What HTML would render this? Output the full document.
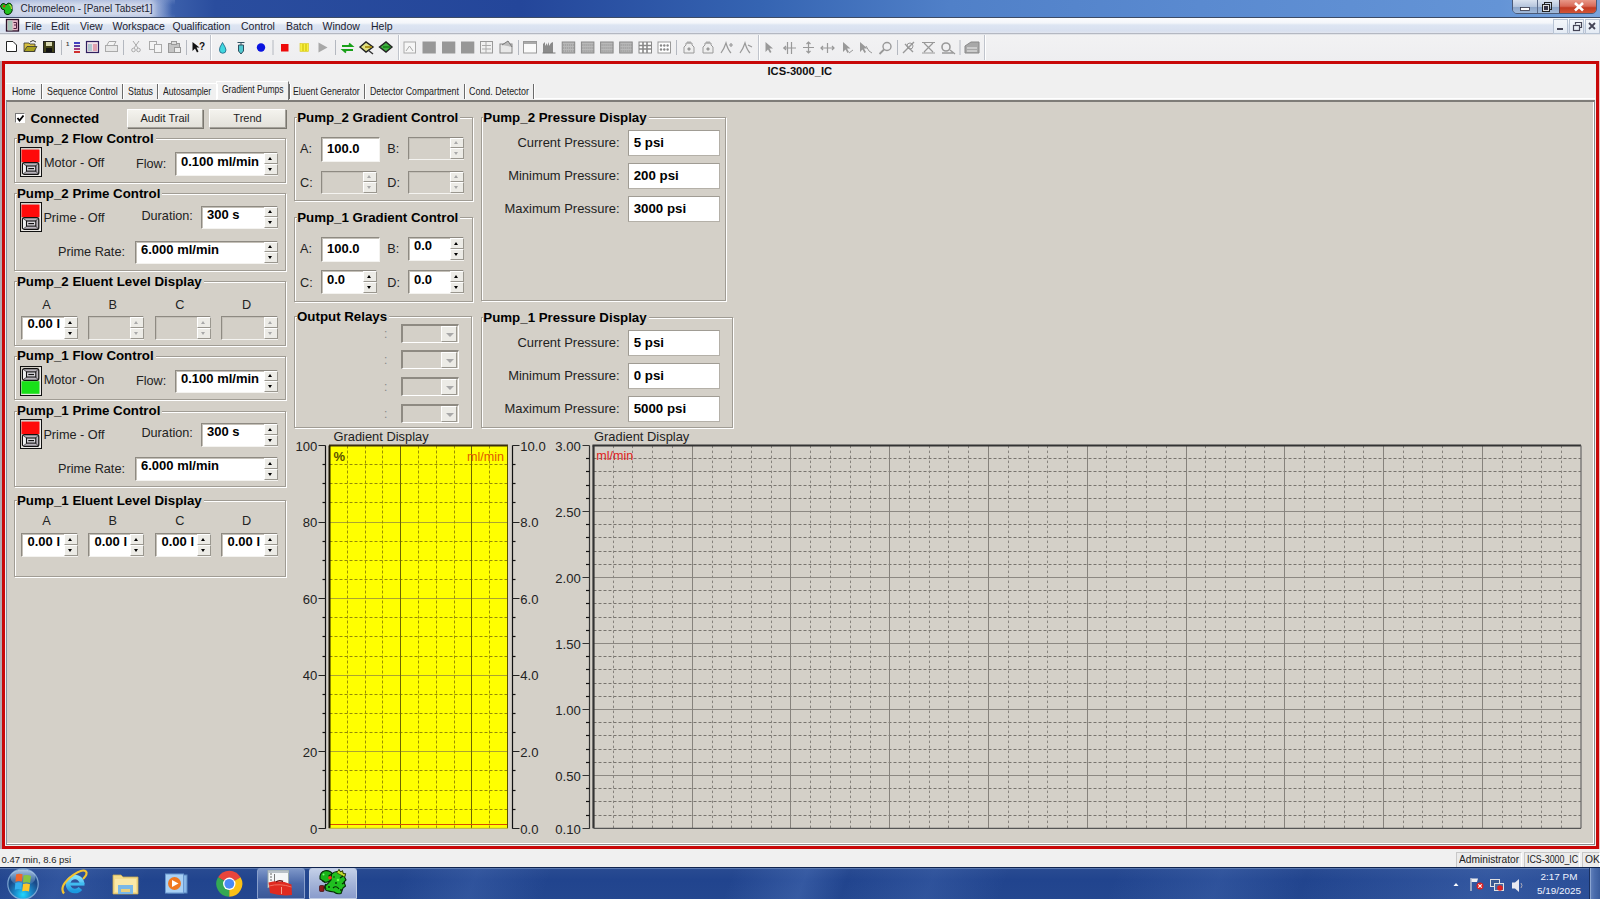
<!DOCTYPE html><html><head><meta charset="utf-8"><style>
html,body{margin:0;padding:0;}
body{width:1600px;height:899px;overflow:hidden;position:relative;font-family:"Liberation Sans",sans-serif;background:#d4d0c8;}
.t{position:absolute;white-space:nowrap;line-height:1;}
</style></head><body>
<div style="position:absolute;left:0px;top:0px;width:1600px;height:17px;background:linear-gradient(90deg,#8ea4d0 0px,#5a7cc0 150px,#3a5eaa 175px,#2a4d9e 215px,#24469a 520px,#3564b2 760px,#5080c8 950px,#5a8ad0 1200px,#6494d6 1500px,#7aa4dc 1600px);"></div>
<div style="position:absolute;left:0px;top:0px;width:175px;height:17px;background:linear-gradient(90deg,rgba(176,190,222,1) 0px,rgba(206,214,234,1) 16px,rgba(212,220,236,1) 80px,rgba(206,214,234,1) 150px,rgba(190,202,230,0.6) 158px,rgba(190,202,230,0) 172px);"></div>
<div style="position:absolute;left:0px;top:0px;width:175px;height:17px;background:linear-gradient(rgba(120,145,200,0.35) 0px,rgba(120,145,200,0) 5px,rgba(120,145,200,0) 14px,rgba(120,145,200,0.2) 17px);"></div>
<div style="position:absolute;left:0px;top:17px;width:1600px;height:1px;background:#3c4b66;"></div>
<div class="t" style="left:20.5px;top:4.03px;font-size:10px;font-weight:normal;color:#1e2533;">Chromeleon - [Panel Tabset1]</div>
<div style="position:absolute;left:0px;top:18px;width:1600px;height:16px;background:linear-gradient(#fbfcfe 0px,#f4f6fa 5px,#dde5f2 7px,#d8e0ef 13px,#e2e6f0 15px);"></div>
<div style="position:absolute;left:0px;top:33px;width:1600px;height:1px;background:#b4b8c2;"></div>
<div style="position:absolute;left:0px;top:34px;width:1600px;height:1px;background:#e2e4e8;"></div>
<div class="t" style="left:25px;top:20.77px;font-size:10.5px;font-weight:normal;color:#1b2230;">File</div>
<div class="t" style="left:51px;top:20.77px;font-size:10.5px;font-weight:normal;color:#1b2230;">Edit</div>
<div class="t" style="left:80px;top:20.77px;font-size:10.5px;font-weight:normal;color:#1b2230;">View</div>
<div class="t" style="left:112.5px;top:20.77px;font-size:10.5px;font-weight:normal;color:#1b2230;">Workspace</div>
<div class="t" style="left:172.5px;top:20.77px;font-size:10.5px;font-weight:normal;color:#1b2230;">Qualification</div>
<div class="t" style="left:241px;top:20.77px;font-size:10.5px;font-weight:normal;color:#1b2230;">Control</div>
<div class="t" style="left:286px;top:20.77px;font-size:10.5px;font-weight:normal;color:#1b2230;">Batch</div>
<div class="t" style="left:322.5px;top:20.77px;font-size:10.5px;font-weight:normal;color:#1b2230;">Window</div>
<div class="t" style="left:371px;top:20.77px;font-size:10.5px;font-weight:normal;color:#1b2230;">Help</div>
<div style="position:absolute;left:0px;top:35px;width:1600px;height:26px;background:linear-gradient(#f2f2f3,#eeeef0);"></div>
<div style="position:absolute;left:0px;top:61px;width:2px;height:788px;background:#b4a8b0;"></div>
<div style="position:absolute;left:1599px;top:61px;width:1px;height:788px;background:#e8c4c4;"></div>
<div style="position:absolute;left:2px;top:61px;width:1597px;height:788px;box-sizing:border-box;border:3px solid #c80808;background:#f0f0f0;"></div>
<!--PANEL-->
<div style="position:absolute;left:6px;top:98px;width:1589px;height:1px;background:#fff;"></div>
<div style="position:absolute;left:6px;top:100px;width:1589px;height:745px;background:#d4d0c8;box-sizing:border-box;border-top:2px solid #7e7c78;border-left:1px solid #8890a0;border-right:1px solid #8a8a8a;border-bottom:1px solid #8a8a8a;box-shadow:inset -1px -1px 0 #fff;"></div>
<div class="t" style="left:767.5px;top:66.18px;font-size:11.2px;font-weight:bold;color:#111;">ICS-3000_IC</div>
<div style="position:absolute;left:6px;top:82px;width:528px;height:18px;background:#f0f0f0;"></div>
<div class="t" style="left:11.75px;top:85.71px;font-size:11px;font-weight:normal;color:#222;transform:scaleX(0.7923);transform-origin:0 0;">Home</div>
<div style="position:absolute;left:41px;top:84px;width:1px;height:15px;background:#6a6a6a;border-right:1px solid #fff;"></div>
<div class="t" style="left:46.75px;top:85.71px;font-size:11px;font-weight:normal;color:#222;transform:scaleX(0.8028);transform-origin:0 0;">Sequence Control</div>
<div style="position:absolute;left:122px;top:84px;width:1px;height:15px;background:#6a6a6a;border-right:1px solid #fff;"></div>
<div class="t" style="left:127.5px;top:85.71px;font-size:11px;font-weight:normal;color:#222;transform:scaleX(0.8008);transform-origin:0 0;">Status</div>
<div style="position:absolute;left:157px;top:84px;width:1px;height:15px;background:#6a6a6a;border-right:1px solid #fff;"></div>
<div class="t" style="left:162.5px;top:85.71px;font-size:11px;font-weight:normal;color:#222;transform:scaleX(0.7810);transform-origin:0 0;">Autosampler</div>
<div style="position:absolute;left:216px;top:84px;width:1px;height:15px;background:#6a6a6a;border-right:1px solid #fff;"></div>
<div class="t" style="left:221.75px;top:84.21px;font-size:11px;font-weight:normal;color:#222;transform:scaleX(0.7733);transform-origin:0 0;">Gradient Pumps</div>
<div style="position:absolute;left:289px;top:84px;width:1px;height:15px;background:#6a6a6a;border-right:1px solid #fff;"></div>
<div class="t" style="left:293.25px;top:85.71px;font-size:11px;font-weight:normal;color:#222;transform:scaleX(0.7961);transform-origin:0 0;">Eluent Generator</div>
<div style="position:absolute;left:364px;top:84px;width:1px;height:15px;background:#6a6a6a;border-right:1px solid #fff;"></div>
<div class="t" style="left:370px;top:85.71px;font-size:11px;font-weight:normal;color:#222;transform:scaleX(0.7987);transform-origin:0 0;">Detector Compartment</div>
<div style="position:absolute;left:464px;top:84px;width:1px;height:15px;background:#6a6a6a;border-right:1px solid #fff;"></div>
<div class="t" style="left:468.6px;top:85.71px;font-size:11px;font-weight:normal;color:#222;transform:scaleX(0.8105);transform-origin:0 0;">Cond. Detector</div>
<div style="position:absolute;left:533px;top:84px;width:1px;height:15px;background:#6a6a6a;border-right:1px solid #fff;"></div>
<div style="position:absolute;left:216px;top:81px;width:73px;height:19px;box-sizing:border-box;border-top:1px solid #fff;border-left:1px solid #fff;border-right:1px solid #777;"></div>
<div style="position:absolute;left:6px;top:83px;width:210px;height:1px;background:#fff;"></div>
<div style="position:absolute;left:15px;top:113px;width:10px;height:10px;background:#fff;box-sizing:border-box;border-top:1px solid #777;border-left:1px solid #777;border-bottom:1px solid #fff;border-right:1px solid #fff;"></div>
<svg style="position:absolute;left:16px;top:114px" width="9" height="9"><path d="M1.5 4 L3.5 6.5 L7.5 1.5" stroke="#000" stroke-width="1.8" fill="none"/></svg>
<div class="t" style="left:30.5px;top:111.74px;font-size:13.3px;font-weight:bold;color:#000;">Connected</div>
<div style="position:absolute;left:127px;top:109px;width:76px;height:19px;background:linear-gradient(#f4f3ee,#e3e1da);box-sizing:border-box;border:1px solid #a4a19a;border-top-color:#fff;border-left-color:#fff;box-shadow:1px 1px 0 #7a776f;"></div>
<div class="t" style="left:127px;top:113.2px;width:76px;text-align:center;font-size:11px;color:#222;">Audit Trail</div>
<div style="position:absolute;left:209px;top:109px;width:77px;height:19px;background:linear-gradient(#f4f3ee,#e3e1da);box-sizing:border-box;border:1px solid #a4a19a;border-top-color:#fff;border-left-color:#fff;box-shadow:1px 1px 0 #7a776f;"></div>
<div class="t" style="left:209px;top:113.2px;width:77px;text-align:center;font-size:11px;color:#222;">Trend</div>
<div style="position:absolute;left:14px;top:138px;width:272px;height:45px;border:1px solid #a09c94;box-shadow:inset 1px 1px 0 #fff,1px 1px 0 #fff;box-sizing:border-box;"></div>
<div class="t" style="left:17px;top:132.34px;font-size:13.3px;font-weight:bold;color:#000;background:#d4d0c8;padding-right:2px;">Pump_2 Flow Control</div>
<svg style="position:absolute;left:20px;top:147px" width="22" height="30"><rect x="0.5" y="0.5" width="21" height="29" fill="#d4d0c8" stroke="#111"/><line x1="20" y1="1.5" x2="20" y2="28.5" stroke="#fff" stroke-width="1.2"/><line x1="1.5" y1="28" x2="20.5" y2="28" stroke="#fff"/><rect x="1.5" y="2.6" width="18" height="12.6" fill="#ff0a0a"/><rect x="2.5" y="15.700000000000001" width="16.3" height="11.7" rx="2" fill="#b9b4bc" stroke="#111" stroke-width="1.2"/><path d="M3 16.2 L6.8 19.2 M18.3 16.2 L15.5 19.2 M3 26.9 L6.8 24.0 M18.3 26.9 L15.5 24.0" stroke="#333" stroke-width="0.8"/><path d="M3 16.9 L6.3 19.4 V23.9 L3 26.4Z" fill="#eef0f0"/><rect x="6.5" y="19.0" width="9.3" height="5.1" fill="#d8d6dc" stroke="#111" stroke-width="1.1"/><line x1="8.3" y1="21.6" x2="14" y2="21.6" stroke="#111" stroke-width="1.2"/></svg>
<div class="t" style="left:44px;top:156.81px;font-size:12.7px;font-weight:normal;color:#222;">Motor - Off</div>
<div class="t" style="left:136px;top:157.51px;font-size:12.7px;font-weight:normal;color:#222;">Flow:</div>
<div style="position:absolute;left:175px;top:152px;width:103px;height:24px;background:#fff;box-sizing:border-box;border-top:1px solid #8e8a82;border-left:1px solid #8e8a82;border-bottom:1px solid #f4f3f0;border-right:1px solid #f4f3f0;box-shadow:inset 1px 1px 0 #c4c0b8;"></div>
<div style="position:absolute;left:264px;top:153px;width:14px;height:11px;background:#ecebe6;box-sizing:border-box;border-top:1px solid #fff;border-left:1px solid #fff;border-right:1px solid #9a978f;border-bottom:1px solid #9a978f;"><div style="position:absolute;left:3px;top:3px;width:0;height:0;border-left:2.5px solid transparent;border-right:2.5px solid transparent;border-bottom:3px solid #000;"></div></div>
<div style="position:absolute;left:264px;top:164px;width:14px;height:11px;background:#ecebe6;box-sizing:border-box;border-top:1px solid #fff;border-left:1px solid #fff;border-right:1px solid #9a978f;border-bottom:1px solid #9a978f;"><div style="position:absolute;left:3px;top:3px;width:0;height:0;border-left:2.5px solid transparent;border-right:2.5px solid transparent;border-top:3px solid #000;"></div></div>
<div class="t" style="left:181px;top:155.27px;font-size:13px;font-weight:bold;color:#000;">0.100 ml/min</div>
<div style="position:absolute;left:14px;top:193px;width:272px;height:78px;border:1px solid #a09c94;box-shadow:inset 1px 1px 0 #fff,1px 1px 0 #fff;box-sizing:border-box;"></div>
<div class="t" style="left:17px;top:187.44px;font-size:13.3px;font-weight:bold;color:#000;background:#d4d0c8;padding-right:2px;">Pump_2 Prime Control</div>
<svg style="position:absolute;left:20px;top:202px" width="22" height="30"><rect x="0.5" y="0.5" width="21" height="29" fill="#d4d0c8" stroke="#111"/><line x1="20" y1="1.5" x2="20" y2="28.5" stroke="#fff" stroke-width="1.2"/><line x1="1.5" y1="28" x2="20.5" y2="28" stroke="#fff"/><rect x="1.5" y="2.6" width="18" height="12.6" fill="#ff0a0a"/><rect x="2.5" y="15.700000000000001" width="16.3" height="11.7" rx="2" fill="#b9b4bc" stroke="#111" stroke-width="1.2"/><path d="M3 16.2 L6.8 19.2 M18.3 16.2 L15.5 19.2 M3 26.9 L6.8 24.0 M18.3 26.9 L15.5 24.0" stroke="#333" stroke-width="0.8"/><path d="M3 16.9 L6.3 19.4 V23.9 L3 26.4Z" fill="#eef0f0"/><rect x="6.5" y="19.0" width="9.3" height="5.1" fill="#d8d6dc" stroke="#111" stroke-width="1.1"/><line x1="8.3" y1="21.6" x2="14" y2="21.6" stroke="#111" stroke-width="1.2"/></svg>
<div class="t" style="left:43.4px;top:211.51px;font-size:12.7px;font-weight:normal;color:#222;">Prime - Off</div>
<div class="t" style="left:141.4px;top:209.81px;font-size:12.7px;font-weight:normal;color:#222;">Duration:</div>
<div style="position:absolute;left:201px;top:206px;width:77px;height:23px;background:#fff;box-sizing:border-box;border-top:1px solid #8e8a82;border-left:1px solid #8e8a82;border-bottom:1px solid #f4f3f0;border-right:1px solid #f4f3f0;box-shadow:inset 1px 1px 0 #c4c0b8;"></div>
<div style="position:absolute;left:264px;top:207px;width:14px;height:10px;background:#ecebe6;box-sizing:border-box;border-top:1px solid #fff;border-left:1px solid #fff;border-right:1px solid #9a978f;border-bottom:1px solid #9a978f;"><div style="position:absolute;left:3px;top:2px;width:0;height:0;border-left:2.5px solid transparent;border-right:2.5px solid transparent;border-bottom:3px solid #000;"></div></div>
<div style="position:absolute;left:264px;top:217px;width:14px;height:11px;background:#ecebe6;box-sizing:border-box;border-top:1px solid #fff;border-left:1px solid #fff;border-right:1px solid #9a978f;border-bottom:1px solid #9a978f;"><div style="position:absolute;left:3px;top:3px;width:0;height:0;border-left:2.5px solid transparent;border-right:2.5px solid transparent;border-top:3px solid #000;"></div></div>
<div class="t" style="left:207px;top:207.97px;font-size:13px;font-weight:bold;color:#000;">300 s</div>
<div class="t" style="left:58px;top:246.01px;font-size:12.7px;font-weight:normal;color:#222;">Prime Rate:</div>
<div style="position:absolute;left:135px;top:241px;width:143px;height:23px;background:#fff;box-sizing:border-box;border-top:1px solid #8e8a82;border-left:1px solid #8e8a82;border-bottom:1px solid #f4f3f0;border-right:1px solid #f4f3f0;box-shadow:inset 1px 1px 0 #c4c0b8;"></div>
<div style="position:absolute;left:264px;top:242px;width:14px;height:10px;background:#ecebe6;box-sizing:border-box;border-top:1px solid #fff;border-left:1px solid #fff;border-right:1px solid #9a978f;border-bottom:1px solid #9a978f;"><div style="position:absolute;left:3px;top:2px;width:0;height:0;border-left:2.5px solid transparent;border-right:2.5px solid transparent;border-bottom:3px solid #000;"></div></div>
<div style="position:absolute;left:264px;top:252px;width:14px;height:11px;background:#ecebe6;box-sizing:border-box;border-top:1px solid #fff;border-left:1px solid #fff;border-right:1px solid #9a978f;border-bottom:1px solid #9a978f;"><div style="position:absolute;left:3px;top:3px;width:0;height:0;border-left:2.5px solid transparent;border-right:2.5px solid transparent;border-top:3px solid #000;"></div></div>
<div class="t" style="left:141px;top:242.97px;font-size:13px;font-weight:bold;color:#000;">6.000 ml/min</div>
<div style="position:absolute;left:14px;top:281px;width:272px;height:65px;border:1px solid #a09c94;box-shadow:inset 1px 1px 0 #fff,1px 1px 0 #fff;box-sizing:border-box;"></div>
<div class="t" style="left:17px;top:275.44px;font-size:13.3px;font-weight:bold;color:#000;background:#d4d0c8;padding-right:2px;">Pump_2 Eluent Level Display</div>
<div class="t" style="left:26.5px;top:298.51px;width:40px;text-align:center;font-size:12.7px;color:#222;">A</div>
<div class="t" style="left:92.8px;top:298.51px;width:40px;text-align:center;font-size:12.7px;color:#222;">B</div>
<div class="t" style="left:159.9px;top:298.51px;width:40px;text-align:center;font-size:12.7px;color:#222;">C</div>
<div class="t" style="left:226.7px;top:298.51px;width:40px;text-align:center;font-size:12.7px;color:#222;">D</div>
<div style="position:absolute;left:21px;top:316px;width:57px;height:24px;background:#fff;box-sizing:border-box;border-top:1px solid #8e8a82;border-left:1px solid #8e8a82;border-bottom:1px solid #f4f3f0;border-right:1px solid #f4f3f0;box-shadow:inset 1px 1px 0 #c4c0b8;"></div>
<div style="position:absolute;left:64px;top:317px;width:14px;height:11px;background:#ecebe6;box-sizing:border-box;border-top:1px solid #fff;border-left:1px solid #fff;border-right:1px solid #9a978f;border-bottom:1px solid #9a978f;"><div style="position:absolute;left:3px;top:3px;width:0;height:0;border-left:2.5px solid transparent;border-right:2.5px solid transparent;border-bottom:3px solid #000;"></div></div>
<div style="position:absolute;left:64px;top:328px;width:14px;height:11px;background:#ecebe6;box-sizing:border-box;border-top:1px solid #fff;border-left:1px solid #fff;border-right:1px solid #9a978f;border-bottom:1px solid #9a978f;"><div style="position:absolute;left:3px;top:3px;width:0;height:0;border-left:2.5px solid transparent;border-right:2.5px solid transparent;border-top:3px solid #000;"></div></div>
<div class="t" style="left:27.5px;top:317.47px;font-size:13px;font-weight:bold;color:#000;">0.00 l</div>
<div style="position:absolute;left:88px;top:316px;width:56px;height:24px;background:#d4d0c8;box-sizing:border-box;border-top:1px solid #8e8a82;border-left:1px solid #8e8a82;border-bottom:1px solid #f4f3f0;border-right:1px solid #f4f3f0;box-shadow:inset 1px 1px 0 #c4c0b8;"></div>
<div style="position:absolute;left:130px;top:317px;width:14px;height:11px;background:#ecebe6;box-sizing:border-box;border-top:1px solid #fff;border-left:1px solid #fff;border-right:1px solid #9a978f;border-bottom:1px solid #9a978f;"><div style="position:absolute;left:3px;top:3px;width:0;height:0;border-left:2.5px solid transparent;border-right:2.5px solid transparent;border-bottom:3px solid #a8a8a8;"></div></div>
<div style="position:absolute;left:130px;top:328px;width:14px;height:11px;background:#ecebe6;box-sizing:border-box;border-top:1px solid #fff;border-left:1px solid #fff;border-right:1px solid #9a978f;border-bottom:1px solid #9a978f;"><div style="position:absolute;left:3px;top:3px;width:0;height:0;border-left:2.5px solid transparent;border-right:2.5px solid transparent;border-top:3px solid #a8a8a8;"></div></div>
<div style="position:absolute;left:155px;top:316px;width:56px;height:24px;background:#d4d0c8;box-sizing:border-box;border-top:1px solid #8e8a82;border-left:1px solid #8e8a82;border-bottom:1px solid #f4f3f0;border-right:1px solid #f4f3f0;box-shadow:inset 1px 1px 0 #c4c0b8;"></div>
<div style="position:absolute;left:197px;top:317px;width:14px;height:11px;background:#ecebe6;box-sizing:border-box;border-top:1px solid #fff;border-left:1px solid #fff;border-right:1px solid #9a978f;border-bottom:1px solid #9a978f;"><div style="position:absolute;left:3px;top:3px;width:0;height:0;border-left:2.5px solid transparent;border-right:2.5px solid transparent;border-bottom:3px solid #a8a8a8;"></div></div>
<div style="position:absolute;left:197px;top:328px;width:14px;height:11px;background:#ecebe6;box-sizing:border-box;border-top:1px solid #fff;border-left:1px solid #fff;border-right:1px solid #9a978f;border-bottom:1px solid #9a978f;"><div style="position:absolute;left:3px;top:3px;width:0;height:0;border-left:2.5px solid transparent;border-right:2.5px solid transparent;border-top:3px solid #a8a8a8;"></div></div>
<div style="position:absolute;left:221px;top:316px;width:57px;height:24px;background:#d4d0c8;box-sizing:border-box;border-top:1px solid #8e8a82;border-left:1px solid #8e8a82;border-bottom:1px solid #f4f3f0;border-right:1px solid #f4f3f0;box-shadow:inset 1px 1px 0 #c4c0b8;"></div>
<div style="position:absolute;left:264px;top:317px;width:14px;height:11px;background:#ecebe6;box-sizing:border-box;border-top:1px solid #fff;border-left:1px solid #fff;border-right:1px solid #9a978f;border-bottom:1px solid #9a978f;"><div style="position:absolute;left:3px;top:3px;width:0;height:0;border-left:2.5px solid transparent;border-right:2.5px solid transparent;border-bottom:3px solid #a8a8a8;"></div></div>
<div style="position:absolute;left:264px;top:328px;width:14px;height:11px;background:#ecebe6;box-sizing:border-box;border-top:1px solid #fff;border-left:1px solid #fff;border-right:1px solid #9a978f;border-bottom:1px solid #9a978f;"><div style="position:absolute;left:3px;top:3px;width:0;height:0;border-left:2.5px solid transparent;border-right:2.5px solid transparent;border-top:3px solid #a8a8a8;"></div></div>
<div style="position:absolute;left:14px;top:356px;width:272px;height:44px;border:1px solid #a09c94;box-shadow:inset 1px 1px 0 #fff,1px 1px 0 #fff;box-sizing:border-box;"></div>
<div class="t" style="left:17px;top:349.44px;font-size:13.3px;font-weight:bold;color:#000;background:#d4d0c8;padding-right:2px;">Pump_1 Flow Control</div>
<svg style="position:absolute;left:20px;top:366px" width="22" height="30"><rect x="0.5" y="0.5" width="21" height="29" fill="#d4d0c8" stroke="#111"/><line x1="20" y1="1.5" x2="20" y2="28.5" stroke="#fff" stroke-width="1.2"/><line x1="1.5" y1="28" x2="20.5" y2="28" stroke="#fff"/><rect x="1.5" y="15.2" width="18" height="12.6" fill="#19e019"/><rect x="2.5" y="2.5999999999999996" width="16.3" height="11.7" rx="2" fill="#b9b4bc" stroke="#111" stroke-width="1.2"/><path d="M3 3.0999999999999996 L6.8 6.1 M18.3 3.0999999999999996 L15.5 6.1 M3 13.8 L6.8 10.899999999999999 M18.3 13.8 L15.5 10.899999999999999" stroke="#333" stroke-width="0.8"/><path d="M3 3.8 L6.3 6.3 V10.8 L3 13.3Z" fill="#eef0f0"/><rect x="6.5" y="5.9" width="9.3" height="5.1" fill="#d8d6dc" stroke="#111" stroke-width="1.1"/><line x1="8.3" y1="8.5" x2="14" y2="8.5" stroke="#111" stroke-width="1.2"/></svg>
<div class="t" style="left:43.7px;top:374.31px;font-size:12.7px;font-weight:normal;color:#222;">Motor - On</div>
<div class="t" style="left:136px;top:375.01px;font-size:12.7px;font-weight:normal;color:#222;">Flow:</div>
<div style="position:absolute;left:175px;top:370px;width:103px;height:23px;background:#fff;box-sizing:border-box;border-top:1px solid #8e8a82;border-left:1px solid #8e8a82;border-bottom:1px solid #f4f3f0;border-right:1px solid #f4f3f0;box-shadow:inset 1px 1px 0 #c4c0b8;"></div>
<div style="position:absolute;left:264px;top:371px;width:14px;height:10px;background:#ecebe6;box-sizing:border-box;border-top:1px solid #fff;border-left:1px solid #fff;border-right:1px solid #9a978f;border-bottom:1px solid #9a978f;"><div style="position:absolute;left:3px;top:2px;width:0;height:0;border-left:2.5px solid transparent;border-right:2.5px solid transparent;border-bottom:3px solid #000;"></div></div>
<div style="position:absolute;left:264px;top:381px;width:14px;height:11px;background:#ecebe6;box-sizing:border-box;border-top:1px solid #fff;border-left:1px solid #fff;border-right:1px solid #9a978f;border-bottom:1px solid #9a978f;"><div style="position:absolute;left:3px;top:3px;width:0;height:0;border-left:2.5px solid transparent;border-right:2.5px solid transparent;border-top:3px solid #000;"></div></div>
<div class="t" style="left:181px;top:371.97px;font-size:13px;font-weight:bold;color:#000;">0.100 ml/min</div>
<div style="position:absolute;left:14px;top:411px;width:272px;height:76px;border:1px solid #a09c94;box-shadow:inset 1px 1px 0 #fff,1px 1px 0 #fff;box-sizing:border-box;"></div>
<div class="t" style="left:17px;top:404.24px;font-size:13.3px;font-weight:bold;color:#000;background:#d4d0c8;padding-right:2px;">Pump_1 Prime Control</div>
<svg style="position:absolute;left:20px;top:419px" width="22" height="30"><rect x="0.5" y="0.5" width="21" height="29" fill="#d4d0c8" stroke="#111"/><line x1="20" y1="1.5" x2="20" y2="28.5" stroke="#fff" stroke-width="1.2"/><line x1="1.5" y1="28" x2="20.5" y2="28" stroke="#fff"/><rect x="1.5" y="2.6" width="18" height="12.6" fill="#ff0a0a"/><rect x="2.5" y="15.700000000000001" width="16.3" height="11.7" rx="2" fill="#b9b4bc" stroke="#111" stroke-width="1.2"/><path d="M3 16.2 L6.8 19.2 M18.3 16.2 L15.5 19.2 M3 26.9 L6.8 24.0 M18.3 26.9 L15.5 24.0" stroke="#333" stroke-width="0.8"/><path d="M3 16.9 L6.3 19.4 V23.9 L3 26.4Z" fill="#eef0f0"/><rect x="6.5" y="19.0" width="9.3" height="5.1" fill="#d8d6dc" stroke="#111" stroke-width="1.1"/><line x1="8.3" y1="21.6" x2="14" y2="21.6" stroke="#111" stroke-width="1.2"/></svg>
<div class="t" style="left:43.4px;top:428.51px;font-size:12.7px;font-weight:normal;color:#222;">Prime - Off</div>
<div class="t" style="left:141.4px;top:426.81px;font-size:12.7px;font-weight:normal;color:#222;">Duration:</div>
<div style="position:absolute;left:201px;top:423px;width:77px;height:24px;background:#fff;box-sizing:border-box;border-top:1px solid #8e8a82;border-left:1px solid #8e8a82;border-bottom:1px solid #f4f3f0;border-right:1px solid #f4f3f0;box-shadow:inset 1px 1px 0 #c4c0b8;"></div>
<div style="position:absolute;left:264px;top:424px;width:14px;height:11px;background:#ecebe6;box-sizing:border-box;border-top:1px solid #fff;border-left:1px solid #fff;border-right:1px solid #9a978f;border-bottom:1px solid #9a978f;"><div style="position:absolute;left:3px;top:3px;width:0;height:0;border-left:2.5px solid transparent;border-right:2.5px solid transparent;border-bottom:3px solid #000;"></div></div>
<div style="position:absolute;left:264px;top:435px;width:14px;height:11px;background:#ecebe6;box-sizing:border-box;border-top:1px solid #fff;border-left:1px solid #fff;border-right:1px solid #9a978f;border-bottom:1px solid #9a978f;"><div style="position:absolute;left:3px;top:3px;width:0;height:0;border-left:2.5px solid transparent;border-right:2.5px solid transparent;border-top:3px solid #000;"></div></div>
<div class="t" style="left:207px;top:424.97px;font-size:13px;font-weight:bold;color:#000;">300 s</div>
<div class="t" style="left:58px;top:462.51px;font-size:12.7px;font-weight:normal;color:#222;">Prime Rate:</div>
<div style="position:absolute;left:135px;top:457px;width:143px;height:24px;background:#fff;box-sizing:border-box;border-top:1px solid #8e8a82;border-left:1px solid #8e8a82;border-bottom:1px solid #f4f3f0;border-right:1px solid #f4f3f0;box-shadow:inset 1px 1px 0 #c4c0b8;"></div>
<div style="position:absolute;left:264px;top:458px;width:14px;height:11px;background:#ecebe6;box-sizing:border-box;border-top:1px solid #fff;border-left:1px solid #fff;border-right:1px solid #9a978f;border-bottom:1px solid #9a978f;"><div style="position:absolute;left:3px;top:3px;width:0;height:0;border-left:2.5px solid transparent;border-right:2.5px solid transparent;border-bottom:3px solid #000;"></div></div>
<div style="position:absolute;left:264px;top:469px;width:14px;height:11px;background:#ecebe6;box-sizing:border-box;border-top:1px solid #fff;border-left:1px solid #fff;border-right:1px solid #9a978f;border-bottom:1px solid #9a978f;"><div style="position:absolute;left:3px;top:3px;width:0;height:0;border-left:2.5px solid transparent;border-right:2.5px solid transparent;border-top:3px solid #000;"></div></div>
<div class="t" style="left:141px;top:459.47px;font-size:13px;font-weight:bold;color:#000;">6.000 ml/min</div>
<div style="position:absolute;left:14px;top:500px;width:272px;height:77px;border:1px solid #a09c94;box-shadow:inset 1px 1px 0 #fff,1px 1px 0 #fff;box-sizing:border-box;"></div>
<div class="t" style="left:17px;top:493.74px;font-size:13.3px;font-weight:bold;color:#000;background:#d4d0c8;padding-right:2px;">Pump_1 Eluent Level Display</div>
<div class="t" style="left:26.5px;top:515.41px;width:40px;text-align:center;font-size:12.7px;color:#222;">A</div>
<div class="t" style="left:92.8px;top:515.41px;width:40px;text-align:center;font-size:12.7px;color:#222;">B</div>
<div class="t" style="left:159.9px;top:515.41px;width:40px;text-align:center;font-size:12.7px;color:#222;">C</div>
<div class="t" style="left:226.7px;top:515.41px;width:40px;text-align:center;font-size:12.7px;color:#222;">D</div>
<div style="position:absolute;left:21px;top:533px;width:57px;height:24px;background:#fff;box-sizing:border-box;border-top:1px solid #8e8a82;border-left:1px solid #8e8a82;border-bottom:1px solid #f4f3f0;border-right:1px solid #f4f3f0;box-shadow:inset 1px 1px 0 #c4c0b8;"></div>
<div style="position:absolute;left:64px;top:534px;width:14px;height:11px;background:#ecebe6;box-sizing:border-box;border-top:1px solid #fff;border-left:1px solid #fff;border-right:1px solid #9a978f;border-bottom:1px solid #9a978f;"><div style="position:absolute;left:3px;top:3px;width:0;height:0;border-left:2.5px solid transparent;border-right:2.5px solid transparent;border-bottom:3px solid #000;"></div></div>
<div style="position:absolute;left:64px;top:545px;width:14px;height:11px;background:#ecebe6;box-sizing:border-box;border-top:1px solid #fff;border-left:1px solid #fff;border-right:1px solid #9a978f;border-bottom:1px solid #9a978f;"><div style="position:absolute;left:3px;top:3px;width:0;height:0;border-left:2.5px solid transparent;border-right:2.5px solid transparent;border-top:3px solid #000;"></div></div>
<div class="t" style="left:27.5px;top:534.97px;font-size:13px;font-weight:bold;color:#000;">0.00 l</div>
<div style="position:absolute;left:88px;top:533px;width:56px;height:24px;background:#fff;box-sizing:border-box;border-top:1px solid #8e8a82;border-left:1px solid #8e8a82;border-bottom:1px solid #f4f3f0;border-right:1px solid #f4f3f0;box-shadow:inset 1px 1px 0 #c4c0b8;"></div>
<div style="position:absolute;left:130px;top:534px;width:14px;height:11px;background:#ecebe6;box-sizing:border-box;border-top:1px solid #fff;border-left:1px solid #fff;border-right:1px solid #9a978f;border-bottom:1px solid #9a978f;"><div style="position:absolute;left:3px;top:3px;width:0;height:0;border-left:2.5px solid transparent;border-right:2.5px solid transparent;border-bottom:3px solid #000;"></div></div>
<div style="position:absolute;left:130px;top:545px;width:14px;height:11px;background:#ecebe6;box-sizing:border-box;border-top:1px solid #fff;border-left:1px solid #fff;border-right:1px solid #9a978f;border-bottom:1px solid #9a978f;"><div style="position:absolute;left:3px;top:3px;width:0;height:0;border-left:2.5px solid transparent;border-right:2.5px solid transparent;border-top:3px solid #000;"></div></div>
<div class="t" style="left:94.5px;top:534.97px;font-size:13px;font-weight:bold;color:#000;">0.00 l</div>
<div style="position:absolute;left:155px;top:533px;width:56px;height:24px;background:#fff;box-sizing:border-box;border-top:1px solid #8e8a82;border-left:1px solid #8e8a82;border-bottom:1px solid #f4f3f0;border-right:1px solid #f4f3f0;box-shadow:inset 1px 1px 0 #c4c0b8;"></div>
<div style="position:absolute;left:197px;top:534px;width:14px;height:11px;background:#ecebe6;box-sizing:border-box;border-top:1px solid #fff;border-left:1px solid #fff;border-right:1px solid #9a978f;border-bottom:1px solid #9a978f;"><div style="position:absolute;left:3px;top:3px;width:0;height:0;border-left:2.5px solid transparent;border-right:2.5px solid transparent;border-bottom:3px solid #000;"></div></div>
<div style="position:absolute;left:197px;top:545px;width:14px;height:11px;background:#ecebe6;box-sizing:border-box;border-top:1px solid #fff;border-left:1px solid #fff;border-right:1px solid #9a978f;border-bottom:1px solid #9a978f;"><div style="position:absolute;left:3px;top:3px;width:0;height:0;border-left:2.5px solid transparent;border-right:2.5px solid transparent;border-top:3px solid #000;"></div></div>
<div class="t" style="left:161.5px;top:534.97px;font-size:13px;font-weight:bold;color:#000;">0.00 l</div>
<div style="position:absolute;left:221px;top:533px;width:57px;height:24px;background:#fff;box-sizing:border-box;border-top:1px solid #8e8a82;border-left:1px solid #8e8a82;border-bottom:1px solid #f4f3f0;border-right:1px solid #f4f3f0;box-shadow:inset 1px 1px 0 #c4c0b8;"></div>
<div style="position:absolute;left:264px;top:534px;width:14px;height:11px;background:#ecebe6;box-sizing:border-box;border-top:1px solid #fff;border-left:1px solid #fff;border-right:1px solid #9a978f;border-bottom:1px solid #9a978f;"><div style="position:absolute;left:3px;top:3px;width:0;height:0;border-left:2.5px solid transparent;border-right:2.5px solid transparent;border-bottom:3px solid #000;"></div></div>
<div style="position:absolute;left:264px;top:545px;width:14px;height:11px;background:#ecebe6;box-sizing:border-box;border-top:1px solid #fff;border-left:1px solid #fff;border-right:1px solid #9a978f;border-bottom:1px solid #9a978f;"><div style="position:absolute;left:3px;top:3px;width:0;height:0;border-left:2.5px solid transparent;border-right:2.5px solid transparent;border-top:3px solid #000;"></div></div>
<div class="t" style="left:227.5px;top:534.97px;font-size:13px;font-weight:bold;color:#000;">0.00 l</div>
<div style="position:absolute;left:294px;top:117px;width:179px;height:84px;border:1px solid #a09c94;box-shadow:inset 1px 1px 0 #fff,1px 1px 0 #fff;box-sizing:border-box;"></div>
<div class="t" style="left:297.2px;top:110.64px;font-size:13.3px;font-weight:bold;color:#000;background:#d4d0c8;padding-right:2px;">Pump_2 Gradient Control</div>
<div class="t" style="left:300px;top:143.01px;font-size:12.7px;font-weight:normal;color:#222;">A:</div>
<div style="position:absolute;left:321px;top:137px;width:59px;height:25px;background:#fff;box-sizing:border-box;border-top:1px solid #8e8a82;border-left:1px solid #8e8a82;border-bottom:1px solid #f4f3f0;border-right:1px solid #f4f3f0;box-shadow:inset 1px 1px 0 #c4c0b8;"></div>
<div class="t" style="left:327px;top:141.97px;font-size:13px;font-weight:bold;color:#000;">100.0</div>
<div class="t" style="left:387.3px;top:143.01px;font-size:12.7px;font-weight:normal;color:#222;">B:</div>
<div style="position:absolute;left:408px;top:137px;width:56px;height:23px;background:#d4d0c8;box-sizing:border-box;border-top:1px solid #8e8a82;border-left:1px solid #8e8a82;border-bottom:1px solid #f4f3f0;border-right:1px solid #f4f3f0;box-shadow:inset 1px 1px 0 #c4c0b8;"></div>
<div style="position:absolute;left:450px;top:138px;width:14px;height:10px;background:#ecebe6;box-sizing:border-box;border-top:1px solid #fff;border-left:1px solid #fff;border-right:1px solid #9a978f;border-bottom:1px solid #9a978f;"><div style="position:absolute;left:3px;top:2px;width:0;height:0;border-left:2.5px solid transparent;border-right:2.5px solid transparent;border-bottom:3px solid #a8a8a8;"></div></div>
<div style="position:absolute;left:450px;top:148px;width:14px;height:11px;background:#ecebe6;box-sizing:border-box;border-top:1px solid #fff;border-left:1px solid #fff;border-right:1px solid #9a978f;border-bottom:1px solid #9a978f;"><div style="position:absolute;left:3px;top:3px;width:0;height:0;border-left:2.5px solid transparent;border-right:2.5px solid transparent;border-top:3px solid #a8a8a8;"></div></div>
<div class="t" style="left:300px;top:176.51px;font-size:12.7px;font-weight:normal;color:#222;">C:</div>
<div style="position:absolute;left:321px;top:171px;width:56px;height:23px;background:#d4d0c8;box-sizing:border-box;border-top:1px solid #8e8a82;border-left:1px solid #8e8a82;border-bottom:1px solid #f4f3f0;border-right:1px solid #f4f3f0;box-shadow:inset 1px 1px 0 #c4c0b8;"></div>
<div style="position:absolute;left:363px;top:172px;width:14px;height:10px;background:#ecebe6;box-sizing:border-box;border-top:1px solid #fff;border-left:1px solid #fff;border-right:1px solid #9a978f;border-bottom:1px solid #9a978f;"><div style="position:absolute;left:3px;top:2px;width:0;height:0;border-left:2.5px solid transparent;border-right:2.5px solid transparent;border-bottom:3px solid #a8a8a8;"></div></div>
<div style="position:absolute;left:363px;top:182px;width:14px;height:11px;background:#ecebe6;box-sizing:border-box;border-top:1px solid #fff;border-left:1px solid #fff;border-right:1px solid #9a978f;border-bottom:1px solid #9a978f;"><div style="position:absolute;left:3px;top:3px;width:0;height:0;border-left:2.5px solid transparent;border-right:2.5px solid transparent;border-top:3px solid #a8a8a8;"></div></div>
<div class="t" style="left:387.3px;top:176.51px;font-size:12.7px;font-weight:normal;color:#222;">D:</div>
<div style="position:absolute;left:408px;top:171px;width:56px;height:23px;background:#d4d0c8;box-sizing:border-box;border-top:1px solid #8e8a82;border-left:1px solid #8e8a82;border-bottom:1px solid #f4f3f0;border-right:1px solid #f4f3f0;box-shadow:inset 1px 1px 0 #c4c0b8;"></div>
<div style="position:absolute;left:450px;top:172px;width:14px;height:10px;background:#ecebe6;box-sizing:border-box;border-top:1px solid #fff;border-left:1px solid #fff;border-right:1px solid #9a978f;border-bottom:1px solid #9a978f;"><div style="position:absolute;left:3px;top:2px;width:0;height:0;border-left:2.5px solid transparent;border-right:2.5px solid transparent;border-bottom:3px solid #a8a8a8;"></div></div>
<div style="position:absolute;left:450px;top:182px;width:14px;height:11px;background:#ecebe6;box-sizing:border-box;border-top:1px solid #fff;border-left:1px solid #fff;border-right:1px solid #9a978f;border-bottom:1px solid #9a978f;"><div style="position:absolute;left:3px;top:3px;width:0;height:0;border-left:2.5px solid transparent;border-right:2.5px solid transparent;border-top:3px solid #a8a8a8;"></div></div>
<div style="position:absolute;left:294px;top:217px;width:179px;height:85px;border:1px solid #a09c94;box-shadow:inset 1px 1px 0 #fff,1px 1px 0 #fff;box-sizing:border-box;"></div>
<div class="t" style="left:297.2px;top:210.74px;font-size:13.3px;font-weight:bold;color:#000;background:#d4d0c8;padding-right:2px;">Pump_1 Gradient Control</div>
<div class="t" style="left:300px;top:243.01px;font-size:12.7px;font-weight:normal;color:#222;">A:</div>
<div style="position:absolute;left:321px;top:237px;width:59px;height:25px;background:#fff;box-sizing:border-box;border-top:1px solid #8e8a82;border-left:1px solid #8e8a82;border-bottom:1px solid #f4f3f0;border-right:1px solid #f4f3f0;box-shadow:inset 1px 1px 0 #c4c0b8;"></div>
<div class="t" style="left:327px;top:241.97px;font-size:13px;font-weight:bold;color:#000;">100.0</div>
<div class="t" style="left:387.3px;top:243.01px;font-size:12.7px;font-weight:normal;color:#222;">B:</div>
<div style="position:absolute;left:408px;top:237px;width:56px;height:24px;background:#fff;box-sizing:border-box;border-top:1px solid #8e8a82;border-left:1px solid #8e8a82;border-bottom:1px solid #f4f3f0;border-right:1px solid #f4f3f0;box-shadow:inset 1px 1px 0 #c4c0b8;"></div>
<div style="position:absolute;left:450px;top:238px;width:14px;height:11px;background:#ecebe6;box-sizing:border-box;border-top:1px solid #fff;border-left:1px solid #fff;border-right:1px solid #9a978f;border-bottom:1px solid #9a978f;"><div style="position:absolute;left:3px;top:3px;width:0;height:0;border-left:2.5px solid transparent;border-right:2.5px solid transparent;border-bottom:3px solid #000;"></div></div>
<div style="position:absolute;left:450px;top:249px;width:14px;height:11px;background:#ecebe6;box-sizing:border-box;border-top:1px solid #fff;border-left:1px solid #fff;border-right:1px solid #9a978f;border-bottom:1px solid #9a978f;"><div style="position:absolute;left:3px;top:3px;width:0;height:0;border-left:2.5px solid transparent;border-right:2.5px solid transparent;border-top:3px solid #000;"></div></div>
<div class="t" style="left:414px;top:239.47px;font-size:13px;font-weight:bold;color:#000;">0.0</div>
<div class="t" style="left:300px;top:276.51px;font-size:12.7px;font-weight:normal;color:#222;">C:</div>
<div style="position:absolute;left:321px;top:270px;width:56px;height:24px;background:#fff;box-sizing:border-box;border-top:1px solid #8e8a82;border-left:1px solid #8e8a82;border-bottom:1px solid #f4f3f0;border-right:1px solid #f4f3f0;box-shadow:inset 1px 1px 0 #c4c0b8;"></div>
<div style="position:absolute;left:363px;top:271px;width:14px;height:11px;background:#ecebe6;box-sizing:border-box;border-top:1px solid #fff;border-left:1px solid #fff;border-right:1px solid #9a978f;border-bottom:1px solid #9a978f;"><div style="position:absolute;left:3px;top:3px;width:0;height:0;border-left:2.5px solid transparent;border-right:2.5px solid transparent;border-bottom:3px solid #000;"></div></div>
<div style="position:absolute;left:363px;top:282px;width:14px;height:11px;background:#ecebe6;box-sizing:border-box;border-top:1px solid #fff;border-left:1px solid #fff;border-right:1px solid #9a978f;border-bottom:1px solid #9a978f;"><div style="position:absolute;left:3px;top:3px;width:0;height:0;border-left:2.5px solid transparent;border-right:2.5px solid transparent;border-top:3px solid #000;"></div></div>
<div class="t" style="left:327px;top:272.97px;font-size:13px;font-weight:bold;color:#000;">0.0</div>
<div class="t" style="left:387.3px;top:276.51px;font-size:12.7px;font-weight:normal;color:#222;">D:</div>
<div style="position:absolute;left:408px;top:270px;width:56px;height:24px;background:#fff;box-sizing:border-box;border-top:1px solid #8e8a82;border-left:1px solid #8e8a82;border-bottom:1px solid #f4f3f0;border-right:1px solid #f4f3f0;box-shadow:inset 1px 1px 0 #c4c0b8;"></div>
<div style="position:absolute;left:450px;top:271px;width:14px;height:11px;background:#ecebe6;box-sizing:border-box;border-top:1px solid #fff;border-left:1px solid #fff;border-right:1px solid #9a978f;border-bottom:1px solid #9a978f;"><div style="position:absolute;left:3px;top:3px;width:0;height:0;border-left:2.5px solid transparent;border-right:2.5px solid transparent;border-bottom:3px solid #000;"></div></div>
<div style="position:absolute;left:450px;top:282px;width:14px;height:11px;background:#ecebe6;box-sizing:border-box;border-top:1px solid #fff;border-left:1px solid #fff;border-right:1px solid #9a978f;border-bottom:1px solid #9a978f;"><div style="position:absolute;left:3px;top:3px;width:0;height:0;border-left:2.5px solid transparent;border-right:2.5px solid transparent;border-top:3px solid #000;"></div></div>
<div class="t" style="left:414px;top:272.97px;font-size:13px;font-weight:bold;color:#000;">0.0</div>
<div style="position:absolute;left:294px;top:316px;width:178px;height:112px;border:1px solid #a09c94;box-shadow:inset 1px 1px 0 #fff,1px 1px 0 #fff;box-sizing:border-box;"></div>
<div class="t" style="left:297px;top:310.44px;font-size:13.3px;font-weight:bold;color:#000;background:#d4d0c8;padding-right:2px;">Output Relays</div>
<div class="t" style="left:384px;top:327.59px;font-size:12px;font-weight:normal;color:#888;">:</div>
<div style="position:absolute;left:401px;top:324px;width:58px;height:19px;background:#d4d0c8;box-sizing:border-box;border-top:2px solid #8e8a82;border-left:2px solid #8e8a82;border-bottom:1px solid #fff;border-right:1px solid #fff;"></div>
<div style="position:absolute;left:441px;top:326px;width:16px;height:16px;background:#ecebe6;box-sizing:border-box;border-top:1px solid #fff;border-left:1px solid #fff;border-right:1px solid #9a978f;border-bottom:1px solid #9a978f;"><div style="position:absolute;left:4px;top:6px;width:0;height:0;border-left:4px solid transparent;border-right:4px solid transparent;border-top:4px solid #a8a8a8;"></div></div>
<div class="t" style="left:384px;top:353.59px;font-size:12px;font-weight:normal;color:#888;">:</div>
<div style="position:absolute;left:401px;top:350px;width:58px;height:19px;background:#d4d0c8;box-sizing:border-box;border-top:2px solid #8e8a82;border-left:2px solid #8e8a82;border-bottom:1px solid #fff;border-right:1px solid #fff;"></div>
<div style="position:absolute;left:441px;top:352px;width:16px;height:16px;background:#ecebe6;box-sizing:border-box;border-top:1px solid #fff;border-left:1px solid #fff;border-right:1px solid #9a978f;border-bottom:1px solid #9a978f;"><div style="position:absolute;left:4px;top:6px;width:0;height:0;border-left:4px solid transparent;border-right:4px solid transparent;border-top:4px solid #a8a8a8;"></div></div>
<div class="t" style="left:384px;top:380.59px;font-size:12px;font-weight:normal;color:#888;">:</div>
<div style="position:absolute;left:401px;top:377px;width:58px;height:19px;background:#d4d0c8;box-sizing:border-box;border-top:2px solid #8e8a82;border-left:2px solid #8e8a82;border-bottom:1px solid #fff;border-right:1px solid #fff;"></div>
<div style="position:absolute;left:441px;top:379px;width:16px;height:16px;background:#ecebe6;box-sizing:border-box;border-top:1px solid #fff;border-left:1px solid #fff;border-right:1px solid #9a978f;border-bottom:1px solid #9a978f;"><div style="position:absolute;left:4px;top:6px;width:0;height:0;border-left:4px solid transparent;border-right:4px solid transparent;border-top:4px solid #a8a8a8;"></div></div>
<div class="t" style="left:384px;top:407.59px;font-size:12px;font-weight:normal;color:#888;">:</div>
<div style="position:absolute;left:401px;top:404px;width:58px;height:19px;background:#d4d0c8;box-sizing:border-box;border-top:2px solid #8e8a82;border-left:2px solid #8e8a82;border-bottom:1px solid #fff;border-right:1px solid #fff;"></div>
<div style="position:absolute;left:441px;top:406px;width:16px;height:16px;background:#ecebe6;box-sizing:border-box;border-top:1px solid #fff;border-left:1px solid #fff;border-right:1px solid #9a978f;border-bottom:1px solid #9a978f;"><div style="position:absolute;left:4px;top:6px;width:0;height:0;border-left:4px solid transparent;border-right:4px solid transparent;border-top:4px solid #a8a8a8;"></div></div>
<div style="position:absolute;left:481px;top:117px;width:245px;height:184px;border:1px solid #a09c94;box-shadow:inset 1px 1px 0 #fff,1px 1px 0 #fff;box-sizing:border-box;"></div>
<div class="t" style="left:483.3px;top:110.54px;font-size:13.3px;font-weight:bold;color:#000;background:#d4d0c8;padding-right:2px;">Pump_2 Pressure Display</div>
<div class="t" style="right:980.4px;top:136.78px;font-size:12.95px;font-weight:normal;color:#222;text-align:right;">Current Pressure:</div>
<div style="position:absolute;left:628px;top:130px;width:92px;height:26px;background:#fff;box-sizing:border-box;border:1px solid #a09c94;border-bottom-color:#b4b0a8;border-right-color:#b4b0a8;"></div>
<div class="t" style="left:633.7px;top:136.04px;font-size:13.3px;font-weight:bold;color:#000;">5 psi</div>
<div class="t" style="right:980.4px;top:169.78px;font-size:12.95px;font-weight:normal;color:#222;text-align:right;">Minimum Pressure:</div>
<div style="position:absolute;left:628px;top:163px;width:92px;height:26px;background:#fff;box-sizing:border-box;border:1px solid #a09c94;border-bottom-color:#b4b0a8;border-right-color:#b4b0a8;"></div>
<div class="t" style="left:633.7px;top:169.04px;font-size:13.3px;font-weight:bold;color:#000;">200 psi</div>
<div class="t" style="right:980.4px;top:202.78px;font-size:12.95px;font-weight:normal;color:#222;text-align:right;">Maximum Pressure:</div>
<div style="position:absolute;left:628px;top:196px;width:92px;height:26px;background:#fff;box-sizing:border-box;border:1px solid #a09c94;border-bottom-color:#b4b0a8;border-right-color:#b4b0a8;"></div>
<div class="t" style="left:633.7px;top:202.04px;font-size:13.3px;font-weight:bold;color:#000;">3000 psi</div>
<div style="position:absolute;left:481px;top:317px;width:252px;height:111px;border:1px solid #a09c94;box-shadow:inset 1px 1px 0 #fff,1px 1px 0 #fff;box-sizing:border-box;"></div>
<div class="t" style="left:483.3px;top:310.54px;font-size:13.3px;font-weight:bold;color:#000;background:#d4d0c8;padding-right:2px;">Pump_1 Pressure Display</div>
<div class="t" style="right:980.4px;top:336.78px;font-size:12.95px;font-weight:normal;color:#222;text-align:right;">Current Pressure:</div>
<div style="position:absolute;left:628px;top:330px;width:92px;height:26px;background:#fff;box-sizing:border-box;border:1px solid #a09c94;border-bottom-color:#b4b0a8;border-right-color:#b4b0a8;"></div>
<div class="t" style="left:633.7px;top:336.04px;font-size:13.3px;font-weight:bold;color:#000;">5 psi</div>
<div class="t" style="right:980.4px;top:369.78px;font-size:12.95px;font-weight:normal;color:#222;text-align:right;">Minimum Pressure:</div>
<div style="position:absolute;left:628px;top:363px;width:92px;height:26px;background:#fff;box-sizing:border-box;border:1px solid #a09c94;border-bottom-color:#b4b0a8;border-right-color:#b4b0a8;"></div>
<div class="t" style="left:633.7px;top:369.04px;font-size:13.3px;font-weight:bold;color:#000;">0 psi</div>
<div class="t" style="right:980.4px;top:402.78px;font-size:12.95px;font-weight:normal;color:#222;text-align:right;">Maximum Pressure:</div>
<div style="position:absolute;left:628px;top:396px;width:92px;height:26px;background:#fff;box-sizing:border-box;border:1px solid #a09c94;border-bottom-color:#b4b0a8;border-right-color:#b4b0a8;"></div>
<div class="t" style="left:633.7px;top:402.04px;font-size:13.3px;font-weight:bold;color:#000;">5000 psi</div>
<svg style="position:absolute;left:0;top:0" width="1600" height="899" viewBox="0 0 1600 899"><rect x="329.5" y="445.5" width="178.0" height="382.79999999999995" fill="#ffff00"/><line x1="329.5" y1="464.50" x2="507.5" y2="464.50" stroke="#948a08" stroke-width="1" stroke-dasharray="3,2"/><line x1="329.5" y1="483.50" x2="507.5" y2="483.50" stroke="#948a08" stroke-width="1" stroke-dasharray="3,2"/><line x1="329.5" y1="502.50" x2="507.5" y2="502.50" stroke="#948a08" stroke-width="1" stroke-dasharray="3,2"/><line x1="329.5" y1="522.50" x2="507.5" y2="522.50" stroke="#aca430" stroke-width="1"/><line x1="329.5" y1="541.50" x2="507.5" y2="541.50" stroke="#948a08" stroke-width="1" stroke-dasharray="3,2"/><line x1="329.5" y1="560.50" x2="507.5" y2="560.50" stroke="#948a08" stroke-width="1" stroke-dasharray="3,2"/><line x1="329.5" y1="579.50" x2="507.5" y2="579.50" stroke="#948a08" stroke-width="1" stroke-dasharray="3,2"/><line x1="329.5" y1="598.50" x2="507.5" y2="598.50" stroke="#aca430" stroke-width="1"/><line x1="329.5" y1="617.50" x2="507.5" y2="617.50" stroke="#948a08" stroke-width="1" stroke-dasharray="3,2"/><line x1="329.5" y1="636.50" x2="507.5" y2="636.50" stroke="#948a08" stroke-width="1" stroke-dasharray="3,2"/><line x1="329.5" y1="656.50" x2="507.5" y2="656.50" stroke="#948a08" stroke-width="1" stroke-dasharray="3,2"/><line x1="329.5" y1="675.50" x2="507.5" y2="675.50" stroke="#aca430" stroke-width="1"/><line x1="329.5" y1="694.50" x2="507.5" y2="694.50" stroke="#948a08" stroke-width="1" stroke-dasharray="3,2"/><line x1="329.5" y1="713.50" x2="507.5" y2="713.50" stroke="#948a08" stroke-width="1" stroke-dasharray="3,2"/><line x1="329.5" y1="732.50" x2="507.5" y2="732.50" stroke="#948a08" stroke-width="1" stroke-dasharray="3,2"/><line x1="329.5" y1="751.50" x2="507.5" y2="751.50" stroke="#aca430" stroke-width="1"/><line x1="329.5" y1="770.50" x2="507.5" y2="770.50" stroke="#948a08" stroke-width="1" stroke-dasharray="3,2"/><line x1="329.5" y1="790.50" x2="507.5" y2="790.50" stroke="#948a08" stroke-width="1" stroke-dasharray="3,2"/><line x1="329.5" y1="809.50" x2="507.5" y2="809.50" stroke="#948a08" stroke-width="1" stroke-dasharray="3,2"/><line x1="347.50" y1="445.5" x2="347.50" y2="828.3" stroke="#9a9000" stroke-width="1" stroke-dasharray="3,2"/><line x1="365.50" y1="445.5" x2="365.50" y2="828.3" stroke="#9a9000" stroke-width="1" stroke-dasharray="3,2"/><line x1="382.50" y1="445.5" x2="382.50" y2="828.3" stroke="#9a9000" stroke-width="1" stroke-dasharray="3,2"/><line x1="400.50" y1="445.5" x2="400.50" y2="828.3" stroke="#6e6600" stroke-width="1"/><line x1="418.50" y1="445.5" x2="418.50" y2="828.3" stroke="#9a9000" stroke-width="1" stroke-dasharray="3,2"/><line x1="436.50" y1="445.5" x2="436.50" y2="828.3" stroke="#9a9000" stroke-width="1" stroke-dasharray="3,2"/><line x1="454.50" y1="445.5" x2="454.50" y2="828.3" stroke="#9a9000" stroke-width="1" stroke-dasharray="3,2"/><line x1="471.50" y1="445.5" x2="471.50" y2="828.3" stroke="#6e6600" stroke-width="1"/><line x1="489.50" y1="445.5" x2="489.50" y2="828.3" stroke="#9a9000" stroke-width="1" stroke-dasharray="3,2"/><line x1="329.5" y1="824.5" x2="507.5" y2="824.5" stroke="#d84c00" stroke-width="1.2"/><line x1="329.0" y1="445.5" x2="508.0" y2="445.5" stroke="#3a2e10" stroke-width="2"/><line x1="329.5" y1="445.5" x2="329.5" y2="828.3" stroke="#1a1400" stroke-width="2"/><line x1="507.5" y1="445.5" x2="507.5" y2="828.3" stroke="#5a5200" stroke-width="1"/><line x1="329.5" y1="828.3" x2="507.5" y2="828.3" stroke="#b8b040" stroke-width="1"/><line x1="325.5" y1="445.5" x2="325.5" y2="828.8" stroke="#111" stroke-width="1.2"/><line x1="512.5" y1="445.5" x2="512.5" y2="828.8" stroke="#111" stroke-width="1.2"/><line x1="318.5" y1="445.50" x2="325.5" y2="445.50" stroke="#222" stroke-width="1"/><line x1="512.5" y1="445.50" x2="519.5" y2="445.50" stroke="#222" stroke-width="1"/><line x1="322.5" y1="464.50" x2="325.5" y2="464.50" stroke="#111" stroke-width="1.2"/><line x1="512.5" y1="464.50" x2="515.5" y2="464.50" stroke="#111" stroke-width="1.2"/><line x1="322.5" y1="483.50" x2="325.5" y2="483.50" stroke="#111" stroke-width="1.2"/><line x1="512.5" y1="483.50" x2="515.5" y2="483.50" stroke="#111" stroke-width="1.2"/><line x1="322.5" y1="502.50" x2="325.5" y2="502.50" stroke="#111" stroke-width="1.2"/><line x1="512.5" y1="502.50" x2="515.5" y2="502.50" stroke="#111" stroke-width="1.2"/><line x1="318.5" y1="522.50" x2="325.5" y2="522.50" stroke="#222" stroke-width="1"/><line x1="512.5" y1="522.50" x2="519.5" y2="522.50" stroke="#222" stroke-width="1"/><line x1="322.5" y1="541.50" x2="325.5" y2="541.50" stroke="#111" stroke-width="1.2"/><line x1="512.5" y1="541.50" x2="515.5" y2="541.50" stroke="#111" stroke-width="1.2"/><line x1="322.5" y1="560.50" x2="325.5" y2="560.50" stroke="#111" stroke-width="1.2"/><line x1="512.5" y1="560.50" x2="515.5" y2="560.50" stroke="#111" stroke-width="1.2"/><line x1="322.5" y1="579.50" x2="325.5" y2="579.50" stroke="#111" stroke-width="1.2"/><line x1="512.5" y1="579.50" x2="515.5" y2="579.50" stroke="#111" stroke-width="1.2"/><line x1="318.5" y1="598.50" x2="325.5" y2="598.50" stroke="#222" stroke-width="1"/><line x1="512.5" y1="598.50" x2="519.5" y2="598.50" stroke="#222" stroke-width="1"/><line x1="322.5" y1="617.50" x2="325.5" y2="617.50" stroke="#111" stroke-width="1.2"/><line x1="512.5" y1="617.50" x2="515.5" y2="617.50" stroke="#111" stroke-width="1.2"/><line x1="322.5" y1="636.50" x2="325.5" y2="636.50" stroke="#111" stroke-width="1.2"/><line x1="512.5" y1="636.50" x2="515.5" y2="636.50" stroke="#111" stroke-width="1.2"/><line x1="322.5" y1="656.50" x2="325.5" y2="656.50" stroke="#111" stroke-width="1.2"/><line x1="512.5" y1="656.50" x2="515.5" y2="656.50" stroke="#111" stroke-width="1.2"/><line x1="318.5" y1="675.50" x2="325.5" y2="675.50" stroke="#222" stroke-width="1"/><line x1="512.5" y1="675.50" x2="519.5" y2="675.50" stroke="#222" stroke-width="1"/><line x1="322.5" y1="694.50" x2="325.5" y2="694.50" stroke="#111" stroke-width="1.2"/><line x1="512.5" y1="694.50" x2="515.5" y2="694.50" stroke="#111" stroke-width="1.2"/><line x1="322.5" y1="713.50" x2="325.5" y2="713.50" stroke="#111" stroke-width="1.2"/><line x1="512.5" y1="713.50" x2="515.5" y2="713.50" stroke="#111" stroke-width="1.2"/><line x1="322.5" y1="732.50" x2="325.5" y2="732.50" stroke="#111" stroke-width="1.2"/><line x1="512.5" y1="732.50" x2="515.5" y2="732.50" stroke="#111" stroke-width="1.2"/><line x1="318.5" y1="751.50" x2="325.5" y2="751.50" stroke="#222" stroke-width="1"/><line x1="512.5" y1="751.50" x2="519.5" y2="751.50" stroke="#222" stroke-width="1"/><line x1="322.5" y1="770.50" x2="325.5" y2="770.50" stroke="#111" stroke-width="1.2"/><line x1="512.5" y1="770.50" x2="515.5" y2="770.50" stroke="#111" stroke-width="1.2"/><line x1="322.5" y1="790.50" x2="325.5" y2="790.50" stroke="#111" stroke-width="1.2"/><line x1="512.5" y1="790.50" x2="515.5" y2="790.50" stroke="#111" stroke-width="1.2"/><line x1="322.5" y1="809.50" x2="325.5" y2="809.50" stroke="#111" stroke-width="1.2"/><line x1="512.5" y1="809.50" x2="515.5" y2="809.50" stroke="#111" stroke-width="1.2"/><line x1="318.5" y1="828.50" x2="325.5" y2="828.50" stroke="#222" stroke-width="1"/><line x1="512.5" y1="828.50" x2="519.5" y2="828.50" stroke="#222" stroke-width="1"/><line x1="593.5" y1="458.50" x2="1581" y2="458.50" stroke="#78746e" stroke-width="1" stroke-dasharray="3,2"/><line x1="593.5" y1="471.50" x2="1581" y2="471.50" stroke="#78746e" stroke-width="1" stroke-dasharray="3,2"/><line x1="593.5" y1="485.50" x2="1581" y2="485.50" stroke="#78746e" stroke-width="1" stroke-dasharray="3,2"/><line x1="593.5" y1="498.50" x2="1581" y2="498.50" stroke="#78746e" stroke-width="1" stroke-dasharray="3,2"/><line x1="593.5" y1="511.50" x2="1581" y2="511.50" stroke="#8c8882" stroke-width="1"/><line x1="593.5" y1="524.50" x2="1581" y2="524.50" stroke="#78746e" stroke-width="1" stroke-dasharray="3,2"/><line x1="593.5" y1="537.50" x2="1581" y2="537.50" stroke="#78746e" stroke-width="1" stroke-dasharray="3,2"/><line x1="593.5" y1="551.50" x2="1581" y2="551.50" stroke="#78746e" stroke-width="1" stroke-dasharray="3,2"/><line x1="593.5" y1="564.50" x2="1581" y2="564.50" stroke="#78746e" stroke-width="1" stroke-dasharray="3,2"/><line x1="593.5" y1="577.50" x2="1581" y2="577.50" stroke="#8c8882" stroke-width="1"/><line x1="593.5" y1="590.50" x2="1581" y2="590.50" stroke="#78746e" stroke-width="1" stroke-dasharray="3,2"/><line x1="593.5" y1="603.50" x2="1581" y2="603.50" stroke="#78746e" stroke-width="1" stroke-dasharray="3,2"/><line x1="593.5" y1="617.50" x2="1581" y2="617.50" stroke="#78746e" stroke-width="1" stroke-dasharray="3,2"/><line x1="593.5" y1="630.50" x2="1581" y2="630.50" stroke="#78746e" stroke-width="1" stroke-dasharray="3,2"/><line x1="593.5" y1="643.50" x2="1581" y2="643.50" stroke="#8c8882" stroke-width="1"/><line x1="593.5" y1="656.50" x2="1581" y2="656.50" stroke="#78746e" stroke-width="1" stroke-dasharray="3,2"/><line x1="593.5" y1="669.50" x2="1581" y2="669.50" stroke="#78746e" stroke-width="1" stroke-dasharray="3,2"/><line x1="593.5" y1="683.50" x2="1581" y2="683.50" stroke="#78746e" stroke-width="1" stroke-dasharray="3,2"/><line x1="593.5" y1="696.50" x2="1581" y2="696.50" stroke="#78746e" stroke-width="1" stroke-dasharray="3,2"/><line x1="593.5" y1="709.50" x2="1581" y2="709.50" stroke="#8c8882" stroke-width="1"/><line x1="593.5" y1="722.50" x2="1581" y2="722.50" stroke="#78746e" stroke-width="1" stroke-dasharray="3,2"/><line x1="593.5" y1="735.50" x2="1581" y2="735.50" stroke="#78746e" stroke-width="1" stroke-dasharray="3,2"/><line x1="593.5" y1="749.50" x2="1581" y2="749.50" stroke="#78746e" stroke-width="1" stroke-dasharray="3,2"/><line x1="593.5" y1="762.50" x2="1581" y2="762.50" stroke="#78746e" stroke-width="1" stroke-dasharray="3,2"/><line x1="593.5" y1="775.50" x2="1581" y2="775.50" stroke="#8c8882" stroke-width="1"/><line x1="593.5" y1="788.50" x2="1581" y2="788.50" stroke="#78746e" stroke-width="1" stroke-dasharray="3,2"/><line x1="593.5" y1="801.50" x2="1581" y2="801.50" stroke="#78746e" stroke-width="1" stroke-dasharray="3,2"/><line x1="593.5" y1="815.50" x2="1581" y2="815.50" stroke="#78746e" stroke-width="1" stroke-dasharray="3,2"/><line x1="613.50" y1="445.6" x2="613.50" y2="828.3" stroke="#86827c" stroke-width="1" stroke-dasharray="2.5,2.5"/><line x1="632.50" y1="445.6" x2="632.50" y2="828.3" stroke="#86827c" stroke-width="1" stroke-dasharray="2.5,2.5"/><line x1="652.50" y1="445.6" x2="652.50" y2="828.3" stroke="#86827c" stroke-width="1" stroke-dasharray="2.5,2.5"/><line x1="672.50" y1="445.6" x2="672.50" y2="828.3" stroke="#86827c" stroke-width="1" stroke-dasharray="2.5,2.5"/><line x1="692.50" y1="445.6" x2="692.50" y2="828.3" stroke="#86827c" stroke-width="1"/><line x1="712.50" y1="445.6" x2="712.50" y2="828.3" stroke="#86827c" stroke-width="1" stroke-dasharray="2.5,2.5"/><line x1="731.50" y1="445.6" x2="731.50" y2="828.3" stroke="#86827c" stroke-width="1" stroke-dasharray="2.5,2.5"/><line x1="751.50" y1="445.6" x2="751.50" y2="828.3" stroke="#86827c" stroke-width="1" stroke-dasharray="2.5,2.5"/><line x1="771.50" y1="445.6" x2="771.50" y2="828.3" stroke="#86827c" stroke-width="1" stroke-dasharray="2.5,2.5"/><line x1="790.50" y1="445.6" x2="790.50" y2="828.3" stroke="#86827c" stroke-width="1"/><line x1="810.50" y1="445.6" x2="810.50" y2="828.3" stroke="#86827c" stroke-width="1" stroke-dasharray="2.5,2.5"/><line x1="830.50" y1="445.6" x2="830.50" y2="828.3" stroke="#86827c" stroke-width="1" stroke-dasharray="2.5,2.5"/><line x1="850.50" y1="445.6" x2="850.50" y2="828.3" stroke="#86827c" stroke-width="1" stroke-dasharray="2.5,2.5"/><line x1="870.50" y1="445.6" x2="870.50" y2="828.3" stroke="#86827c" stroke-width="1" stroke-dasharray="2.5,2.5"/><line x1="889.50" y1="445.6" x2="889.50" y2="828.3" stroke="#86827c" stroke-width="1"/><line x1="909.50" y1="445.6" x2="909.50" y2="828.3" stroke="#86827c" stroke-width="1" stroke-dasharray="2.5,2.5"/><line x1="929.50" y1="445.6" x2="929.50" y2="828.3" stroke="#86827c" stroke-width="1" stroke-dasharray="2.5,2.5"/><line x1="948.50" y1="445.6" x2="948.50" y2="828.3" stroke="#86827c" stroke-width="1" stroke-dasharray="2.5,2.5"/><line x1="968.50" y1="445.6" x2="968.50" y2="828.3" stroke="#86827c" stroke-width="1" stroke-dasharray="2.5,2.5"/><line x1="988.50" y1="445.6" x2="988.50" y2="828.3" stroke="#86827c" stroke-width="1"/><line x1="1008.50" y1="445.6" x2="1008.50" y2="828.3" stroke="#86827c" stroke-width="1" stroke-dasharray="2.5,2.5"/><line x1="1028.50" y1="445.6" x2="1028.50" y2="828.3" stroke="#86827c" stroke-width="1" stroke-dasharray="2.5,2.5"/><line x1="1047.50" y1="445.6" x2="1047.50" y2="828.3" stroke="#86827c" stroke-width="1" stroke-dasharray="2.5,2.5"/><line x1="1067.50" y1="445.6" x2="1067.50" y2="828.3" stroke="#86827c" stroke-width="1" stroke-dasharray="2.5,2.5"/><line x1="1087.50" y1="445.6" x2="1087.50" y2="828.3" stroke="#86827c" stroke-width="1"/><line x1="1106.50" y1="445.6" x2="1106.50" y2="828.3" stroke="#86827c" stroke-width="1" stroke-dasharray="2.5,2.5"/><line x1="1126.50" y1="445.6" x2="1126.50" y2="828.3" stroke="#86827c" stroke-width="1" stroke-dasharray="2.5,2.5"/><line x1="1146.50" y1="445.6" x2="1146.50" y2="828.3" stroke="#86827c" stroke-width="1" stroke-dasharray="2.5,2.5"/><line x1="1166.50" y1="445.6" x2="1166.50" y2="828.3" stroke="#86827c" stroke-width="1" stroke-dasharray="2.5,2.5"/><line x1="1186.50" y1="445.6" x2="1186.50" y2="828.3" stroke="#86827c" stroke-width="1"/><line x1="1205.50" y1="445.6" x2="1205.50" y2="828.3" stroke="#86827c" stroke-width="1" stroke-dasharray="2.5,2.5"/><line x1="1225.50" y1="445.6" x2="1225.50" y2="828.3" stroke="#86827c" stroke-width="1" stroke-dasharray="2.5,2.5"/><line x1="1245.50" y1="445.6" x2="1245.50" y2="828.3" stroke="#86827c" stroke-width="1" stroke-dasharray="2.5,2.5"/><line x1="1264.50" y1="445.6" x2="1264.50" y2="828.3" stroke="#86827c" stroke-width="1" stroke-dasharray="2.5,2.5"/><line x1="1284.50" y1="445.6" x2="1284.50" y2="828.3" stroke="#86827c" stroke-width="1"/><line x1="1304.50" y1="445.6" x2="1304.50" y2="828.3" stroke="#86827c" stroke-width="1" stroke-dasharray="2.5,2.5"/><line x1="1324.50" y1="445.6" x2="1324.50" y2="828.3" stroke="#86827c" stroke-width="1" stroke-dasharray="2.5,2.5"/><line x1="1344.50" y1="445.6" x2="1344.50" y2="828.3" stroke="#86827c" stroke-width="1" stroke-dasharray="2.5,2.5"/><line x1="1363.50" y1="445.6" x2="1363.50" y2="828.3" stroke="#86827c" stroke-width="1" stroke-dasharray="2.5,2.5"/><line x1="1383.50" y1="445.6" x2="1383.50" y2="828.3" stroke="#86827c" stroke-width="1"/><line x1="1403.50" y1="445.6" x2="1403.50" y2="828.3" stroke="#86827c" stroke-width="1" stroke-dasharray="2.5,2.5"/><line x1="1422.50" y1="445.6" x2="1422.50" y2="828.3" stroke="#86827c" stroke-width="1" stroke-dasharray="2.5,2.5"/><line x1="1442.50" y1="445.6" x2="1442.50" y2="828.3" stroke="#86827c" stroke-width="1" stroke-dasharray="2.5,2.5"/><line x1="1462.50" y1="445.6" x2="1462.50" y2="828.3" stroke="#86827c" stroke-width="1" stroke-dasharray="2.5,2.5"/><line x1="1482.50" y1="445.6" x2="1482.50" y2="828.3" stroke="#86827c" stroke-width="1"/><line x1="1502.50" y1="445.6" x2="1502.50" y2="828.3" stroke="#86827c" stroke-width="1" stroke-dasharray="2.5,2.5"/><line x1="1521.50" y1="445.6" x2="1521.50" y2="828.3" stroke="#86827c" stroke-width="1" stroke-dasharray="2.5,2.5"/><line x1="1541.50" y1="445.6" x2="1541.50" y2="828.3" stroke="#86827c" stroke-width="1" stroke-dasharray="2.5,2.5"/><line x1="1561.50" y1="445.6" x2="1561.50" y2="828.3" stroke="#86827c" stroke-width="1" stroke-dasharray="2.5,2.5"/><line x1="592.5" y1="445.6" x2="1581" y2="445.6" stroke="#333" stroke-width="2"/><line x1="593.5" y1="445.6" x2="593.5" y2="828.3" stroke="#333" stroke-width="2.2"/><line x1="1581" y1="445.6" x2="1581" y2="828.3" stroke="#666" stroke-width="1.2"/><line x1="593.5" y1="828.3" x2="1581" y2="828.3" stroke="#555" stroke-width="1.2"/><line x1="589.5" y1="445.6" x2="589.5" y2="828.8" stroke="#333" stroke-width="1.2"/><line x1="582.5" y1="445.50" x2="589.5" y2="445.50" stroke="#333" stroke-width="1"/><line x1="586" y1="458.50" x2="589.5" y2="458.50" stroke="#111" stroke-width="1.2"/><line x1="586" y1="471.50" x2="589.5" y2="471.50" stroke="#111" stroke-width="1.2"/><line x1="586" y1="485.50" x2="589.5" y2="485.50" stroke="#111" stroke-width="1.2"/><line x1="586" y1="498.50" x2="589.5" y2="498.50" stroke="#111" stroke-width="1.2"/><line x1="582.5" y1="511.50" x2="589.5" y2="511.50" stroke="#333" stroke-width="1"/><line x1="586" y1="524.50" x2="589.5" y2="524.50" stroke="#111" stroke-width="1.2"/><line x1="586" y1="537.50" x2="589.5" y2="537.50" stroke="#111" stroke-width="1.2"/><line x1="586" y1="551.50" x2="589.5" y2="551.50" stroke="#111" stroke-width="1.2"/><line x1="586" y1="564.50" x2="589.5" y2="564.50" stroke="#111" stroke-width="1.2"/><line x1="582.5" y1="577.50" x2="589.5" y2="577.50" stroke="#333" stroke-width="1"/><line x1="586" y1="590.50" x2="589.5" y2="590.50" stroke="#111" stroke-width="1.2"/><line x1="586" y1="603.50" x2="589.5" y2="603.50" stroke="#111" stroke-width="1.2"/><line x1="586" y1="617.50" x2="589.5" y2="617.50" stroke="#111" stroke-width="1.2"/><line x1="586" y1="630.50" x2="589.5" y2="630.50" stroke="#111" stroke-width="1.2"/><line x1="582.5" y1="643.50" x2="589.5" y2="643.50" stroke="#333" stroke-width="1"/><line x1="586" y1="656.50" x2="589.5" y2="656.50" stroke="#111" stroke-width="1.2"/><line x1="586" y1="669.50" x2="589.5" y2="669.50" stroke="#111" stroke-width="1.2"/><line x1="586" y1="683.50" x2="589.5" y2="683.50" stroke="#111" stroke-width="1.2"/><line x1="586" y1="696.50" x2="589.5" y2="696.50" stroke="#111" stroke-width="1.2"/><line x1="582.5" y1="709.50" x2="589.5" y2="709.50" stroke="#333" stroke-width="1"/><line x1="586" y1="722.50" x2="589.5" y2="722.50" stroke="#111" stroke-width="1.2"/><line x1="586" y1="735.50" x2="589.5" y2="735.50" stroke="#111" stroke-width="1.2"/><line x1="586" y1="749.50" x2="589.5" y2="749.50" stroke="#111" stroke-width="1.2"/><line x1="586" y1="762.50" x2="589.5" y2="762.50" stroke="#111" stroke-width="1.2"/><line x1="582.5" y1="775.50" x2="589.5" y2="775.50" stroke="#333" stroke-width="1"/><line x1="586" y1="788.50" x2="589.5" y2="788.50" stroke="#111" stroke-width="1.2"/><line x1="586" y1="801.50" x2="589.5" y2="801.50" stroke="#111" stroke-width="1.2"/><line x1="586" y1="815.50" x2="589.5" y2="815.50" stroke="#111" stroke-width="1.2"/><line x1="582.5" y1="828.50" x2="589.5" y2="828.50" stroke="#333" stroke-width="1"/></svg>
<div class="t" style="left:333.4px;top:431.08px;font-size:12.9px;font-weight:normal;color:#222;">Gradient Display</div>
<div class="t" style="left:594px;top:431.38px;font-size:12.9px;font-weight:normal;color:#222;">Gradient Display</div>
<div class="t" style="left:333.4px;top:449.67px;font-size:13px;font-weight:bold;color:#5c5200;">%</div>
<div class="t" style="left:467px;top:450.82px;font-size:12.6px;font-weight:normal;color:#e05a00;">ml/min</div>
<div class="t" style="left:596.3px;top:450.02px;font-size:12.6px;font-weight:normal;color:#e02020;">ml/min</div>
<div class="t" style="right:1282.6px;top:439.76px;font-size:13.1px;font-weight:normal;color:#222;text-align:right;">100</div>
<div class="t" style="right:1282.6px;top:516.32px;font-size:13.1px;font-weight:normal;color:#222;text-align:right;">80</div>
<div class="t" style="right:1282.6px;top:592.88px;font-size:13.1px;font-weight:normal;color:#222;text-align:right;">60</div>
<div class="t" style="right:1282.6px;top:669.44px;font-size:13.1px;font-weight:normal;color:#222;text-align:right;">40</div>
<div class="t" style="right:1282.6px;top:746.0px;font-size:13.1px;font-weight:normal;color:#222;text-align:right;">20</div>
<div class="t" style="right:1282.6px;top:822.56px;font-size:13.1px;font-weight:normal;color:#222;text-align:right;">0</div>
<div class="t" style="left:520.3px;top:439.76px;font-size:13.1px;font-weight:normal;color:#222;">10.0</div>
<div class="t" style="left:520.3px;top:516.32px;font-size:13.1px;font-weight:normal;color:#222;">8.0</div>
<div class="t" style="left:520.3px;top:592.88px;font-size:13.1px;font-weight:normal;color:#222;">6.0</div>
<div class="t" style="left:520.3px;top:669.44px;font-size:13.1px;font-weight:normal;color:#222;">4.0</div>
<div class="t" style="left:520.3px;top:746.0px;font-size:13.1px;font-weight:normal;color:#222;">2.0</div>
<div class="t" style="left:520.3px;top:822.56px;font-size:13.1px;font-weight:normal;color:#222;">0.0</div>
<div class="t" style="right:1019.2px;top:439.86px;font-size:13.1px;font-weight:normal;color:#222;text-align:right;">3.00</div>
<div class="t" style="right:1019.2px;top:505.84px;font-size:13.1px;font-weight:normal;color:#222;text-align:right;">2.50</div>
<div class="t" style="right:1019.2px;top:571.83px;font-size:13.1px;font-weight:normal;color:#222;text-align:right;">2.00</div>
<div class="t" style="right:1019.2px;top:637.81px;font-size:13.1px;font-weight:normal;color:#222;text-align:right;">1.50</div>
<div class="t" style="right:1019.2px;top:703.79px;font-size:13.1px;font-weight:normal;color:#222;text-align:right;">1.00</div>
<div class="t" style="right:1019.2px;top:769.77px;font-size:13.1px;font-weight:normal;color:#222;text-align:right;">0.50</div>
<div class="t" style="right:1019.2px;top:822.56px;font-size:13.1px;font-weight:normal;color:#222;text-align:right;">0.10</div>
<div style="position:absolute;left:1512px;top:-2px;width:85px;height:16px;border:1px solid #4a5a78;border-radius:0 0 5px 5px;overflow:hidden;box-sizing:border-box;"><div style="position:absolute;left:0;top:0;width:24px;height:16px;background:linear-gradient(#dfe7f2,#b4c4dc 50%,#8ea6c8 52%,#a8c0e0);"></div><div style="position:absolute;left:24px;top:0;width:1px;height:16px;background:#5a6a88;"></div><div style="position:absolute;left:25px;top:0;width:21px;height:16px;background:linear-gradient(#dfe7f2,#b4c4dc 50%,#8ea6c8 52%,#a8c0e0);"></div><div style="position:absolute;left:46px;top:0;width:1px;height:16px;background:#5a3a48;"></div><div style="position:absolute;left:47px;top:0;width:38px;height:16px;background:linear-gradient(#eaa090,#d86a58 45%,#c23a22 55%,#d86040);"></div></div>
<svg style="position:absolute;left:1512px;top:0" width="86" height="15"><rect x="8.5" y="7.5" width="9" height="3" fill="#fff" stroke="#334" stroke-width="0.8"/><rect x="32.5" y="2.5" width="7" height="7" fill="none" stroke="#222" stroke-width="1"/><rect x="30.5" y="4.5" width="7" height="7" fill="#ddd" stroke="#222" stroke-width="1"/><rect x="32" y="6" width="4" height="4" fill="#334"/><path d="M63 3 L71 10.5 M71 3 L63 10.5" stroke="#fff" stroke-width="2.6"/></svg>
<div style="position:absolute;left:1553px;top:19px;width:15px;height:15px;box-sizing:border-box;border:1px solid #b8c4d4;background:linear-gradient(#f4f7fb,#e4ebf4);"></div>
<div style="position:absolute;left:1569px;top:19px;width:15px;height:15px;box-sizing:border-box;border:1px solid #b8c4d4;background:linear-gradient(#f4f7fb,#e4ebf4);"></div>
<div style="position:absolute;left:1585px;top:19px;width:15px;height:15px;box-sizing:border-box;border:1px solid #b8c4d4;background:linear-gradient(#f4f7fb,#e4ebf4);"></div>
<svg style="position:absolute;left:1553px;top:19px" width="47" height="15"><rect x="4" y="9" width="6" height="2" fill="#445"/><rect x="20.5" y="6.5" width="6" height="5" fill="none" stroke="#445" stroke-width="1.2"/><path d="M22.5 5.5 V3.5 H28.5 V8.5 H27" fill="none" stroke="#445" stroke-width="1.2"/><path d="M36 4 L42 10 M42 4 L36 10" stroke="#445" stroke-width="1.8"/></svg>
<svg style="position:absolute;left:0;top:0" width="1000" height="62"><line x1="61.5" y1="40" x2="61.5" y2="55" stroke="#b4b8c0" stroke-width="1"/><line x1="123.5" y1="40" x2="123.5" y2="55" stroke="#b4b8c0" stroke-width="1"/><line x1="186.5" y1="40" x2="186.5" y2="55" stroke="#b4b8c0" stroke-width="1"/><line x1="273" y1="40" x2="273" y2="55" stroke="#b4b8c0" stroke-width="1"/><line x1="335.5" y1="40" x2="335.5" y2="55" stroke="#b4b8c0" stroke-width="1"/><line x1="518.5" y1="40" x2="518.5" y2="55" stroke="#b4b8c0" stroke-width="1"/><line x1="676.5" y1="40" x2="676.5" y2="55" stroke="#b4b8c0" stroke-width="1"/><line x1="897.5" y1="40" x2="897.5" y2="55" stroke="#b4b8c0" stroke-width="1"/><line x1="960" y1="40" x2="960" y2="55" stroke="#b4b8c0" stroke-width="1"/><line x1="210.5" y1="35" x2="210.5" y2="60" stroke="#c0c4cc" stroke-width="1"/><line x1="211.5" y1="35" x2="211.5" y2="60" stroke="#fff" stroke-width="1"/><line x1="398.5" y1="35" x2="398.5" y2="60" stroke="#c0c4cc" stroke-width="1"/><line x1="399.5" y1="35" x2="399.5" y2="60" stroke="#fff" stroke-width="1"/><line x1="758.5" y1="35" x2="758.5" y2="60" stroke="#c0c4cc" stroke-width="1"/><line x1="759.5" y1="35" x2="759.5" y2="60" stroke="#fff" stroke-width="1"/><line x1="984.5" y1="35" x2="984.5" y2="60" stroke="#c0c4cc" stroke-width="1"/><line x1="985.5" y1="35" x2="985.5" y2="60" stroke="#fff" stroke-width="1"/><path d="M6.5 41.5 H13 L16.5 45 V51.5 H6.5 Z" fill="#fff" stroke="#222"/><path d="M24 43 H29 L30 44 H35 V51.5 H24 Z" fill="#d8c040" stroke="#333" stroke-width="0.8"/><path d="M24 51.5 L27 46.5 H37 L34 51.5 Z" fill="#a8a020" stroke="#333" stroke-width="0.8"/><path d="M30 42 Q33 39 36 42" fill="none" stroke="#333"/><rect x="43.5" y="41.5" width="11" height="11" fill="#404018" stroke="#222"/><rect x="46" y="42" width="6" height="4" fill="#d8d8b0"/><rect x="46" y="48" width="6" height="4" fill="#111"/><text x="66" y="46" font-size="6" font-weight="bold" fill="#444" font-family="Liberation Sans">1</text><rect x="74" y="42" width="6" height="2" fill="#4040c0"/><rect x="74" y="45" width="6" height="2" fill="#6040a0"/><rect x="74" y="48" width="6" height="2" fill="#a04080"/><rect x="74" y="51" width="6" height="2" fill="#d03030"/><rect x="86.5" y="41.5" width="12" height="11" fill="#f0e0e8" stroke="#302060" stroke-width="1.2"/><rect x="88" y="44" width="4" height="7" fill="#b0c8d0"/><rect x="93" y="44" width="4" height="7" fill="#e0a0b0"/><rect x="105.5" y="45.5" width="12" height="6" fill="#e8e8e8" stroke="#aaa"/><path d="M107 45 L109 41.5 H116 L114 45" fill="#f4f4f4" stroke="#aaa"/><circle cx="133.5" cy="50" r="1.8" fill="none" stroke="#aaa"/><circle cx="138.5" cy="50" r="1.8" fill="none" stroke="#aaa"/><path d="M134 48 L139 41 M138 48 L133 41" stroke="#aaa"/><rect x="149.5" y="41.5" width="7" height="8" fill="#f4f4f4" stroke="#aaa"/><rect x="154.5" y="44.5" width="7" height="8" fill="#f4f4f4" stroke="#aaa"/><rect x="168.5" y="43.5" width="11" height="9" fill="#c4c4c4" stroke="#999"/><rect x="171.5" y="41.5" width="5" height="3" fill="#ddd" stroke="#999"/><rect x="174.5" y="47.5" width="6" height="5" fill="#eee" stroke="#999"/><path d="M192.5 42 V51 L195 48.5 L197 52.5 L198.5 51.5 L196.5 47.5 H199.5 Z" fill="#111"/><text x="199" y="50" font-size="10" font-weight="bold" fill="#111" font-family="Liberation Sans">?</text><path d="M222.5 42.5 Q219 48 219.5 50 A3.2 3.2 0 0 0 226 50 Q226 48 222.5 42.5 Z" fill="#40d8e0" stroke="#206080" stroke-width="0.8"/><path d="M237.5 42.5 H244.5 M241 42.5 V45 M238.5 45 H243.5 V51 L241 54 L238.5 51 Z" fill="#50c8d0" stroke="#305060" stroke-width="1"/><circle cx="261" cy="47.5" r="4.2" fill="#0a14e0"/><rect x="281" y="44" width="7.5" height="7.5" fill="#ee0a0a"/><rect x="300" y="43.5" width="8.5" height="8" fill="#f8f040" stroke="#d8c820" stroke-width="0.6"/><line x1="303" y1="44" x2="303" y2="51" stroke="#c8b800"/><line x1="306" y1="44" x2="306" y2="51" stroke="#c8b800"/><path d="M318.5 42.5 L327.5 47.5 L318.5 52.5 Z" fill="#a8a8a8"/><path d="M342 46 H352 L349 43.5 M353 50 H343 L346 52.5" fill="none" stroke="#18a018" stroke-width="1.8"/><path d="M360 47 L366 42 L373 47 L366 52 Z" fill="#e0e080" stroke="#222" stroke-width="1.4"/><path d="M365 47 L372 47" stroke="#a08000" stroke-width="1.5"/><path d="M368 50 L373 54" stroke="#333" stroke-width="1.4"/><path d="M379.5 47 L386 42 L392 47 L386 52 Z" fill="#40b040" stroke="#222" stroke-width="1.4"/><path d="M383 47 H390" stroke="#108010" stroke-width="1.5"/><rect x="404" y="42" width="11.5" height="11" fill="#f6f6f6" stroke="#aaa"/><path d="M406 51 L409.5 46 L413 51" fill="none" stroke="#aaa"/><rect x="422.5" y="41.5" width="13.3" height="12" fill="#979797"/><rect x="442" y="41.5" width="13.3" height="12" fill="#979797"/><rect x="461" y="41.5" width="13.3" height="12" fill="#979797"/><rect x="480.5" y="41.5" width="12" height="11.5" fill="#f0f0f0" stroke="#999"/><path d="M482 45.5 H491 M482 49 H491 M486 42 V53" stroke="#aaa"/><rect x="500" y="44" width="12" height="9" fill="#e8e8e8" stroke="#888"/><path d="M502 45 L508 41 L512 47" fill="#bbb" stroke="#777"/><rect x="523.5" y="41.5" width="13" height="11.5" fill="#fafafa" stroke="#999"/><rect x="524" y="42" width="12" height="2" fill="#aaa"/><path d="M543 53 V44 L545 42 V46 L547 43 V46 L549 42 V46 L551 43 L553 42 V53 Z" fill="#8a8a8a"/><line x1="542.5" y1="53" x2="555.5" y2="53" stroke="#777"/><rect x="562.2" y="42" width="12.5" height="11" fill="#b8b8b8" stroke="#888"/><path d="M563.2 45 H574.2 M563.2 48 H574.2 M563.2 51 H574.2" stroke="#888" stroke-dasharray="1,1"/><rect x="581.4" y="42" width="12.5" height="11" fill="#b8b8b8" stroke="#888"/><path d="M582.4 45 H593.4 M582.4 48 H593.4 M582.4 51 H593.4" stroke="#888" stroke-dasharray="1,1"/><rect x="600.6" y="42" width="12.5" height="11" fill="#b8b8b8" stroke="#888"/><path d="M601.6 45 H612.6 M601.6 48 H612.6 M601.6 51 H612.6" stroke="#888" stroke-dasharray="1,1"/><rect x="619.7" y="42" width="12.5" height="11" fill="#b8b8b8" stroke="#888"/><path d="M620.7 45 H631.7 M620.7 48 H631.7 M620.7 51 H631.7" stroke="#888" stroke-dasharray="1,1"/><rect x="639" y="42" width="12.5" height="11" fill="#fff" stroke="#888"/><path d="M643 42 V53 M647 42 V53 M639 45.5 H651.5 M639 49 H651.5" stroke="#888" stroke-width="1.6"/><rect x="658" y="42" width="12.5" height="11" fill="#fff" stroke="#999"/><g fill="#888"><circle cx="661" cy="45.5" r="1.2"/><circle cx="664.3" cy="45.5" r="1.2"/><circle cx="667.6" cy="45.5" r="1.2"/><circle cx="661" cy="49.5" r="1.2"/><circle cx="664.3" cy="49.5" r="1.2"/><circle cx="667.6" cy="49.5" r="1.2"/></g><path d="M686 43 H692 V45 L694 47 V53 H684 V47 L686 45 Z" fill="#eee" stroke="#999"/><rect x="687" y="41.5" width="4" height="2" fill="#aaa"/><path d="M687 49 L689 47 L691 49 L689 51 Z" fill="#999"/><path d="M705 43 H711 V45 L713 47 V53 H703 V47 L705 45 Z" fill="#eee" stroke="#999"/><rect x="706" y="41.5" width="4" height="2" fill="#aaa"/><path d="M706 49 L708 47 L710 49 L708 51 Z" fill="#999"/><path d="M721 53 Q724 49 726 43 Q728 50 731 53 M729 45 H733 M731 43 V47" fill="none" stroke="#999" stroke-width="1.2"/><path d="M740 53 Q743 49 745 43 Q747 50 750 53 M748 45 L752 47" fill="none" stroke="#999" stroke-width="1.2"/><path d="M765.5 42 V52 L768 49.5 L770 53 L771.5 52 L769.5 48.5 H773 Z" fill="#999"/><path d="M783 48 H796 M787.5 42 V54 M791.5 42 V54 M784 48 L786 46 M784 48 L786 50" fill="none" stroke="#999" stroke-width="1.2"/><path d="M803 47.5 H814 M808.5 42 V53 M806.5 44 L808.5 42 L810.5 44 M806.5 51 L808.5 53 L810.5 51" fill="none" stroke="#999" stroke-width="1.2"/><path d="M821 48 H834 M827.5 43 V53 M823 46 L821 48 L823 50 M832 46 L834 48 L832 50" fill="none" stroke="#999" stroke-width="1.2"/><path d="M843 42 V52 L845.5 49.5 L847.5 53 L849 52 L847 48.5 H850.5 Z" fill="#999"/><path d="M849 53 L853 50" stroke="#999"/><path d="M860 42 V52 L862.5 49.5 L864.5 53 L866 52 L864 48.5 H867.5 Z" fill="#999"/><path d="M866 46 L869 51 L872 53" stroke="#999" fill="none"/><circle cx="887" cy="46.5" r="4" fill="none" stroke="#999" stroke-width="1.4"/><path d="M884 49.5 L879.5 54" stroke="#999" stroke-width="1.8"/><path d="M903 53 L914 42 M905 44 L913 52" stroke="#999" stroke-width="1.4"/><circle cx="910" cy="46" r="3" fill="none" stroke="#999"/><path d="M922 42.5 H935 M922 53 H935 M924 43 L933 52 M933 43 L924 52" stroke="#999" stroke-width="1.2"/><circle cx="946" cy="47" r="4" fill="none" stroke="#999" stroke-width="1.6"/><path d="M942 53 H953 M950 50 L955 54" stroke="#999" stroke-width="1.4"/><path d="M965 46 L971 42 H979 V53 H965 Z" fill="#a8a8a8" stroke="#888"/><path d="M967 48 H977 M967 51 H977" stroke="#eee"/></svg>
<svg style="position:absolute;left:0;top:0" width="20" height="34"><path d="M0.5 6 Q1.5 3 4 3.5 L6 5 Q8 2 10.5 3.5 Q12.5 5 12 8 Q13 11 10.5 13.5 Q8 15.5 5.5 14 Q3.5 12 4.5 10 Q1 10 0.5 6 Z" fill="#20c020" stroke="#062a06" stroke-width="1"/><circle cx="4.2" cy="6.2" r="1.2" fill="#c84010"/><path d="M9 4.5 L11 6 L11.5 9" fill="none" stroke="#d8e040" stroke-width="1"/><rect x="6.5" y="19.5" width="12" height="11.5" fill="#e8b8c8" stroke="#2a1028" stroke-width="1.3"/><rect x="7.5" y="20.5" width="5" height="10" fill="#a8c4b8"/><path d="M13.5 22.5 H16.5 V25 H14 M16.5 25 V28.5 H13.5" fill="none" stroke="#502040" stroke-width="1"/></svg>
<div style="position:absolute;left:0px;top:849px;width:1600px;height:18px;background:#f0f0f0;"></div>
<div class="t" style="left:1.5px;top:854.88px;font-size:9.5px;font-weight:normal;color:#222;">0.47 min, 8.6 psi</div>
<div style="position:absolute;left:1456px;top:852px;width:65.5px;height:15px;box-sizing:border-box;border-top:1px solid #c8c8c8;border-left:1px solid #c8c8c8;border-right:1px solid #fff;background:#ebebeb;"></div>
<div class="t" style="left:1459px;top:854.59px;font-size:10.3px;font-weight:normal;color:#222;transform:scaleX(0.99);transform-origin:0 0;">Administrator</div>
<div style="position:absolute;left:1523.5px;top:852px;width:56.5px;height:15px;box-sizing:border-box;border-top:1px solid #c8c8c8;border-left:1px solid #c8c8c8;border-right:1px solid #fff;background:#ebebeb;"></div>
<div class="t" style="left:1526.5px;top:854.59px;font-size:10.3px;font-weight:normal;color:#222;transform:scaleX(0.86);transform-origin:0 0;">ICS-3000_IC</div>
<div style="position:absolute;left:1582px;top:852px;width:18px;height:15px;box-sizing:border-box;border-top:1px solid #c8c8c8;border-left:1px solid #c8c8c8;border-right:1px solid #fff;background:#ebebeb;"></div>
<div class="t" style="left:1585px;top:854.59px;font-size:10.3px;font-weight:normal;color:#222;transform:scaleX(1.0);transform-origin:0 0;">OK</div>
<div style="position:absolute;left:0px;top:867px;width:1600px;height:32px;background:linear-gradient(#2a4c92,#21448e 40%,#24478f);"></div>
<div style="position:absolute;left:0px;top:867px;width:1600px;height:32px;background:linear-gradient(110deg,rgba(255,255,255,0) 0px,rgba(120,160,230,0.18) 60px,rgba(255,255,255,0) 140px,rgba(255,255,255,0) 380px,rgba(120,160,230,0.16) 450px,rgba(255,255,255,0) 520px,rgba(255,255,255,0) 690px,rgba(120,160,230,0.22) 760px,rgba(255,255,255,0) 800px,rgba(120,160,230,0.15) 880px,rgba(255,255,255,0) 950px,rgba(255,255,255,0) 1050px,rgba(120,160,230,0.15) 1150px,rgba(255,255,255,0) 1230px,rgba(120,160,230,0.2) 1400px,rgba(255,255,255,0) 1600px);"></div>
<div style="position:absolute;left:0px;top:867px;width:1600px;height:1px;background:#10244e;"></div>
<div style="position:absolute;left:0px;top:868px;width:1600px;height:1px;background:#5a78b0;"></div>
<div style="position:absolute;left:257px;top:868px;width:48px;height:31px;box-sizing:border-box;border:1px solid #8aa0cc;border-radius:3px 3px 0 0;background:linear-gradient(#7d96c8,#4a68a8 50%,#3a5898);"></div>
<div style="position:absolute;left:309px;top:868px;width:48px;height:31px;box-sizing:border-box;border:1px solid #c0cce4;border-radius:3px 3px 0 0;background:linear-gradient(#c4d0e8,#a4b4d8 50%,#8a9ccc);"></div>
<svg style="position:absolute;left:0;top:0" width="1600" height="899"><defs><radialGradient id="orb" cx="50%" cy="40%" r="60%"><stop offset="0" stop-color="#5ab0e0"/><stop offset="0.6" stop-color="#2a6aa8"/><stop offset="1" stop-color="#1a3a70"/></radialGradient><linearGradient id="ch" x1="0" y1="0" x2="1" y2="1"><stop offset="0" stop-color="#ea4335"/><stop offset="1" stop-color="#fbbc05"/></linearGradient></defs><defs><radialGradient id="orb2" cx="50%" cy="85%" r="55%"><stop offset="0" stop-color="#20d8ff"/><stop offset="0.5" stop-color="#1a88c8"/><stop offset="1" stop-color="#1a4a8a"/></radialGradient><linearGradient id="gl" x1="0" y1="0" x2="0" y2="1"><stop offset="0" stop-color="#e0f0ff" stop-opacity="0.75"/><stop offset="1" stop-color="#a0c8f0" stop-opacity="0.1"/></linearGradient></defs><circle cx="23" cy="884" r="15.2" fill="url(#orb2)" stroke="#90b8e0" stroke-width="1.2" stroke-opacity="0.8"/><ellipse cx="23" cy="877.5" rx="12.5" ry="8" fill="url(#gl)"/><path d="M16 874.5 Q19 873 22.5 874.3 L22 881.5 Q18.5 880.3 15.5 881.8 Z" fill="#f2662a"/><path d="M23.5 875.5 Q27 874.5 31 876 L30 883 Q26.5 881.8 23 882.8 Z" fill="#86c442"/><path d="M15.3 883 Q18.5 881.5 22 882.8 L21.5 889.5 Q18 888.3 14.8 889.8 Z" fill="#34b0f0"/><path d="M23 884 Q26.5 883 30 884.2 L29 891.5 Q25.5 890.3 22.2 891.3 Z" fill="#fcc62a"/><defs><linearGradient id="ieg" x1="0" y1="0" x2="0" y2="1"><stop offset="0" stop-color="#7ee0ff"/><stop offset="1" stop-color="#1a9ae0"/></linearGradient></defs><path d="M82 884 A7 7 0 1 0 80.4 888.5" fill="none" stroke="url(#ieg)" stroke-width="4.6"/><rect x="68.5" y="882.6" width="16" height="3" fill="#40bcf0"/><path d="M64 893.5 Q59 887 70 877.5 Q82 868 86 871.5 Q88 874 83 879" fill="none" stroke="#f4c430" stroke-width="2.2"/><path d="M113 875 H121 L123 877 H138 V894 H113 Z" fill="#f4dc8c" stroke="#c8a850" stroke-width="0.8"/><rect x="115" y="879" width="21" height="13" fill="#fae8a8"/><rect x="118" y="885" width="15" height="9" fill="#7ab8e8"/><rect x="121" y="889" width="9" height="3" fill="#e8d080"/><rect x="168" y="875" width="19" height="18" fill="#8ab8e8" stroke="#5a88c0"/><rect x="165.5" y="874" width="18" height="19" fill="#a8d0f4" stroke="#6a98d0"/><circle cx="174.5" cy="883.5" r="6.5" fill="#f07820"/><path d="M172 880 L178.5 883.5 L172 887 Z" fill="#fff"/><path d="M229.3 883.8 L240.56 877.30 A13 13 0 0 0 218.04 877.30 Z" fill="#e8453c"/><path d="M229.3 883.8 L218.04 877.30 A13 13 0 0 0 229.30 896.80 Z" fill="#34a853"/><path d="M229.3 883.8 L229.30 896.80 A13 13 0 0 0 240.56 877.30 Z" fill="#fbc116"/><circle cx="229.3" cy="883.8" r="6.2" fill="#fff"/><circle cx="229.3" cy="883.8" r="4.9" fill="#4a8af4"/><rect x="268" y="870.5" width="20.5" height="17" fill="#f4f6f8" stroke="#9aa"/><rect x="268" y="870.5" width="20.5" height="2.5" fill="#b8c0c8"/><line x1="274.5" y1="874" x2="274.5" y2="882" stroke="#777"/><path d="M270 874 h2 M270 877 h2 M270 880 h2" stroke="#666"/><path d="M268.5 882.5 Q280 879 291.5 884.5 L292 895 Q281 896.5 270 893 Z" fill="#e02a20"/><path d="M269 886 Q280 883 291.5 887" fill="none" stroke="#f07060" stroke-width="1"/><path d="M276 882 Q279 879.5 283 881.5" fill="none" stroke="#6a1010" stroke-width="1.4"/><line x1="281.5" y1="887" x2="281.5" y2="894" stroke="#f8a090"/><path d="M320 879 Q319.5 872 325 870.8 Q330 870 332.5 874 L331 880 Q328 883 324.5 882 Z" fill="#18b418" stroke="#052a05" stroke-width="1.1"/><path d="M331.5 874 Q335 871 338 871.5 L339 869.8 L340.5 872 L342.5 871 L343 873.5 L345.5 874 L344.5 877 L346 880 L344 882 L345.5 886 L343 888 L341 893.5 Q337 894.5 334 892 Q330 891.5 326.5 890.5 Q324 889 325 886 Q328 884 331 880 Z" fill="#20c020" stroke="#052a05" stroke-width="1.1"/><path d="M337 872 L339 869.8 L340.5 872 L342.5 871 L343 873.5 L345.5 874 L344.5 877 Q341 875 337 873 Z" fill="#c8e030" stroke="#303a00" stroke-width="0.7"/><circle cx="330" cy="877.8" r="1.8" fill="#ff3018"/><circle cx="323.5" cy="874.5" r="1" fill="#7aff7a"/><circle cx="338" cy="880" r="1.3" fill="#60ff40"/><path d="M328.5 876 L331 874.5 M322 880.5 L325 882.5 M326 884 Q324 886 326 889 M333 888 Q336 885 339 889 M340 878 L343 876 M342 884 L345 882" stroke="#052a05" stroke-width="1.1" fill="none"/><circle cx="336" cy="883" r="0.9" fill="#052a05"/><circle cx="341" cy="890" r="0.9" fill="#052a05"/><circle cx="329" cy="887" r="0.9" fill="#052a05"/><circle cx="334" cy="877" r="0.8" fill="#052a05"/><rect x="319.5" y="885.5" width="4.5" height="6" rx="1" fill="#8a1a1a" stroke="#300" stroke-width="0.6"/><path d="M1453.5 886 L1456 883 L1458.5 886 Z" fill="#fff"/><path d="M1471 878 V891" stroke="#ddd" stroke-width="1.2"/><path d="M1471.5 878.5 H1478 L1477 882 H1471.5 Z" fill="#f0f0f0"/><circle cx="1480" cy="886" r="3.5" fill="#e02020"/><path d="M1478.3 884.3 L1481.7 887.7 M1481.7 884.3 L1478.3 887.7" stroke="#fff" stroke-width="1.1"/><rect x="1490.5" y="879.5" width="9" height="7" fill="#3a5a90" stroke="#e0e0e0"/><rect x="1494.5" y="883.5" width="9" height="7" fill="#4a6aa0" stroke="#e0e0e0"/><circle cx="1500" cy="888" r="2.8" fill="#e02020"/><path d="M1512 882.5 H1515 L1519 879 V892 L1515 888.5 H1512 Z" fill="#e8e8f0"/><path d="M1521 883 Q1523 885.5 1521 888" fill="none" stroke="#aab" stroke-width="1"/><defs><linearGradient id="sd" x1="0" y1="0" x2="1" y2="0"><stop offset="0" stop-color="#6a88c0"/><stop offset="0.5" stop-color="#4a6cac"/><stop offset="1" stop-color="#3a5c9c"/></linearGradient></defs><rect x="1589" y="868" width="11" height="31" fill="url(#sd)"/><line x1="1589.5" y1="868" x2="1589.5" y2="899" stroke="#1a3060"/><line x1="1590.5" y1="868" x2="1590.5" y2="899" stroke="#8aa4d0"/></svg>
<div class="t" style="left:1530px;top:870.3px;width:58px;text-align:center;font-size:9.9px;color:#f0f4ff;line-height:13.5px;">2:17 PM<br>5/19/2025</div>
</body></html>
